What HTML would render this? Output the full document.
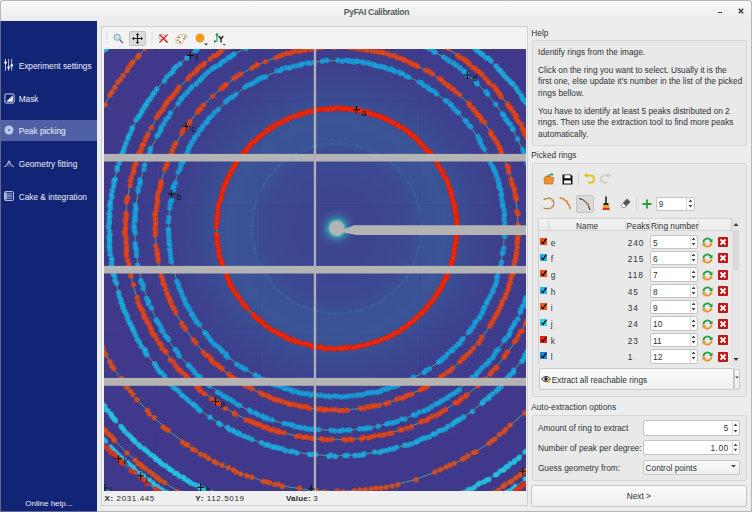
<!DOCTYPE html>
<html><head><meta charset="utf-8"><style>
*{box-sizing:border-box}
html,body{margin:0;padding:0}
body{width:752px;height:512px;overflow:hidden;position:relative;background:#ededed;font-family:"Liberation Sans",sans-serif;color:#2e3436}
.a{position:absolute}
.t{position:absolute;white-space:nowrap}
.gb{position:absolute;border:1px solid #d6d6d6;background:#e9e9e9;border-radius:2px}
.inp{position:absolute;background:#fff;border:1px solid #c5c5c5;border-radius:2px}
.btn{position:absolute;background:linear-gradient(#fbfbfb,#efefef);border:1px solid #c8c8c8;border-radius:2px}
</style></head><body>
<div class="a" style="left:1.00px;top:1.00px;width:750.00px;height:20.00px;background:linear-gradient(#fafafa,#ebebeb);border-radius:3px 3px 0 0"></div>
<div class="t" style="left:376.50px;top:7.90px;font-size:8.5px;line-height:8.5px;color:#555d60;font-weight:bold;letter-spacing:-0.3px;transform:translateX(-50%)">PyFAI Calibration</div>
<div class="a" style="left:718.30px;top:11.60px;width:4.00px;height:1.60px;background:#3a4446"></div>
<svg class="a" style="left:737px;top:7px" width="8" height="8" viewBox="0 0 8 8"><path d="M1.8 1.8L6.2 6.2M6.2 1.8L1.8 6.2" stroke="#3a4446" stroke-width="1.5"/></svg>
<div class="a" style="left:0.00px;top:21.00px;width:97.00px;height:491.00px;background:#122476"></div>
<div class="a" style="left:1.00px;top:119.50px;width:96.00px;height:21.50px;background:#5060a6"></div>
<svg class="a" style="left:3px;top:58px" width="12" height="14" viewBox="0 0 12 14"><path d="M2.5 1V12.6M5.6 1V12.6M8.7 1V12.6" stroke="#eef0f8" stroke-width="0.9" opacity="0.85"/><path d="M2.5 2.8L4.2 4.6L2.5 6.4L0.8 4.6ZM5.6 7.7L7.3 9.5L5.6 11.3L3.9 9.5ZM8.7 5.6L10.4 7.4L8.7 9.2L7 7.4Z" fill="#eef0f8"/></svg>
<svg class="a" style="left:3.5px;top:92.5px" width="11" height="11" viewBox="0 0 11 11"><rect x="0.9" y="0.9" width="9.2" height="9.2" rx="1.3" fill="none" stroke="#c8d0ec" stroke-width="1"/><path d="M2.2 8.8L8.8 2.2V8.8Z" fill="#eef0f8"/></svg>
<svg class="a" style="left:3.6px;top:125.4px" width="10" height="10" viewBox="0 0 10 10"><circle cx="5" cy="5" r="4.5" fill="#bccae8"/><circle cx="5" cy="5" r="0.9" fill="#3a4a90"/></svg>
<svg class="a" style="left:3.9px;top:159.5px" width="10" height="7.5" viewBox="0 0 10 7.5"><path d="M0.3 6.6Q2.6 6.6 3.6 4Q4.5 0.8 5 0.8Q5.5 0.8 6.4 4Q7.4 6.6 9.7 6.6" fill="none" stroke="#eef0f8" stroke-width="0.9"/><path d="M5 1.5V6.8" stroke="#eef0f8" stroke-width="0.6" opacity="0.6"/></svg>
<svg class="a" style="left:3.8px;top:190.9px" width="10" height="10" viewBox="0 0 10 10"><rect x="0.6" y="0.6" width="8.8" height="8.8" rx="0.8" fill="none" stroke="#c8d0ec" stroke-width="1"/><path d="M3 2.8h5M3 4.3h5M3 5.8h5M3 7.3h5" stroke="#b0bce0" stroke-width="0.8"/><path d="M2 1.5V8.5" stroke="#eef0f8" stroke-width="1.3"/></svg>
<div class="t" style="left:18.70px;top:62.07px;font-size:8.3px;line-height:8.3px;color:#eef0f8">Experiment settings</div>
<div class="t" style="left:18.70px;top:94.77px;font-size:8.3px;line-height:8.3px;color:#eef0f8">Mask</div>
<div class="t" style="left:18.70px;top:127.47px;font-size:8.3px;line-height:8.3px;color:#eef0f8">Peak picking</div>
<div class="t" style="left:18.70px;top:160.17px;font-size:8.3px;line-height:8.3px;color:#eef0f8">Geometry fitting</div>
<div class="t" style="left:18.70px;top:192.97px;font-size:8.3px;line-height:8.3px;color:#eef0f8">Cake &amp; integration</div>
<div class="t" style="left:25.30px;top:499.63px;font-size:8.0px;line-height:8.0px;color:#eef0f8">Online help...</div>
<div class="a" style="left:101.00px;top:26.00px;width:427.00px;height:480.00px;border:1px solid #cfcfcf;background:#efefef"></div>
<div class="a" style="left:102.00px;top:27.00px;width:425.00px;height:22.00px;background:#f3f3f3"></div>
<div class="a" style="left:128.50px;top:30.50px;width:17.00px;height:15.50px;background:#dcdcdc;border:1px solid #c2c2c2;border-radius:2px"></div>
<svg class="a" style="left:105px;top:32px" width="4" height="12"><path d="M1 1h2M1 4h2M1 7h2M1 10h2" stroke="#d0d0d0"/></svg>
<svg class="a" style="left:150px;top:32px" width="4" height="12"><path d="M1 1h2M1 4h2M1 7h2M1 10h2" stroke="#d0d0d0"/></svg>
<svg class="a" style="left:113px;top:33px" width="11" height="11" viewBox="0 0 11 11"><circle cx="4.2" cy="4.2" r="3.2" fill="#bfe3f5" stroke="#8a9aa8" stroke-width="0.9"/><path d="M6.6 6.6L10 10" stroke="#6e6e6e" stroke-width="1.4"/></svg>
<svg class="a" style="left:131.5px;top:32.5px" width="11" height="11" viewBox="0 0 11 11"><path d="M5.5 1V10M1 5.5H10" stroke="#111" stroke-width="1.1"/><path d="M5.5 0L3.8 2H7.2ZM5.5 11L3.8 9H7.2ZM0 5.5L2 3.8V7.2ZM11 5.5L9 3.8V7.2Z" fill="#111"/></svg>
<svg class="a" style="left:158px;top:33px" width="11" height="11" viewBox="0 0 11 11"><circle cx="4" cy="4" r="3" fill="#d8e8f0" stroke="#9aa" stroke-width="0.7"/><path d="M6 6L9.5 9.5" stroke="#777" stroke-width="1.2"/><path d="M1.5 1.5L9.5 9.5M9.5 1.5L1.5 9.5" stroke="#e02828" stroke-width="1.3"/></svg>
<svg class="a" style="left:175px;top:32.5px" width="13" height="12" viewBox="0 0 13 12"><path d="M1 8Q0 3 6 1.5Q12 0.5 12 4Q12 6 9 6.5Q7.5 7 8 9Q8.5 11 5 11Q2 11 1 8Z" fill="#fffaf2" stroke="#eaa868" stroke-width="0.8"/><circle cx="4" cy="4.5" r="0.9" fill="#9040c0"/><circle cx="7" cy="3.2" r="0.9" fill="#e8d020"/><circle cx="10" cy="3.5" r="0.9" fill="#30a0e0"/><circle cx="2.8" cy="7.2" r="0.9" fill="#30c040"/><circle cx="5" cy="9" r="0.9" fill="#e03080"/><circle cx="9" cy="5.5" r="0.7" fill="#555"/></svg>
<svg class="a" style="left:194px;top:32px" width="16" height="14" viewBox="0 0 16 14"><circle cx="6" cy="6" r="4.5" fill="#f39a1f"/><path d="M10 11.5h4l-2 2z" fill="#333"/></svg>
<svg class="a" style="left:212px;top:32px" width="16" height="14" viewBox="0 0 16 14"><path d="M5 3V10" stroke="#3cbf6a" stroke-width="1.6"/><circle cx="5" cy="2.6" r="1.3" fill="#2a9a50"/><rect x="2" y="8.5" width="1.8" height="1.8" fill="#444"/><path d="M6.8 4L9 7L11.2 4M9 7V10.5" stroke="#222" stroke-width="1.4" fill="none"/><path d="M10.5 12h3.5l-1.75 1.6z" fill="#444"/></svg>
<svg width="422" height="442" viewBox="104 49 422 442" style="position:absolute;left:104px;top:49px;display:block">
<defs><radialGradient id="glow" cx="336.6" cy="228.5" r="240" gradientUnits="userSpaceOnUse"><stop offset="0" stop-color="#3d4490"/><stop offset="0.17" stop-color="#3d4590"/><stop offset="0.3" stop-color="#3c4a92"/><stop offset="0.37" stop-color="#3b5296"/><stop offset="0.45" stop-color="#3b5597"/><stop offset="0.5" stop-color="#3b5196"/><stop offset="0.54" stop-color="#3b4b92"/><stop offset="0.6" stop-color="#3c4590"/><stop offset="0.7" stop-color="#3e3e8d"/><stop offset="1" stop-color="#40388b"/></radialGradient><radialGradient id="halo" cx="336.8" cy="228.3" r="20" gradientUnits="userSpaceOnUse"><stop offset="0.36" stop-color="#40c8b8"/><stop offset="0.5" stop-color="#3c8aac" stop-opacity="0.8"/><stop offset="0.75" stop-color="#3b5c9c" stop-opacity="0.5"/><stop offset="1" stop-color="#3b5598" stop-opacity="0"/></radialGradient></defs>
<rect x="104" y="49" width="422" height="442" fill="url(#glow)"/>
<g stroke="#38308a" stroke-width="1" opacity="0.2"><path d="M156 49V491M260 49V491M420 49V491M103 101H526M103 205H526M103 335H526M103 440H526"/></g>
<circle cx="336.6" cy="228.5" r="85" fill="none" stroke="#3a66a6" stroke-width="3" opacity="0.3"/><circle cx="336.6" cy="228.5" r="85" fill="none" stroke="#2ab0c8" stroke-width="1.2" stroke-dasharray="1.2 5 1 11 1.5 3 1 14 1 6" opacity="0.4"/>
<circle cx="336.6" cy="228.5" r="120" fill="none" stroke="#60d080" stroke-width="1" opacity="0.65"/>
<circle cx="336.6" cy="228.5" r="168" fill="none" stroke="#60d080" stroke-width="1" opacity="0.65"/>
<circle cx="336.6" cy="228.5" r="181.6" fill="none" stroke="#60d080" stroke-width="1" opacity="0.65"/>
<circle cx="336.6" cy="228.5" r="202" fill="none" stroke="#60d080" stroke-width="1" opacity="0.65"/>
<circle cx="336.6" cy="228.5" r="211.3" fill="none" stroke="#60d080" stroke-width="1" opacity="0.65"/>
<circle cx="336.6" cy="228.5" r="227.4" fill="none" stroke="#60d080" stroke-width="1" opacity="0.65"/>
<circle cx="336.6" cy="228.5" r="263" fill="none" stroke="#60d080" stroke-width="1" opacity="0.65"/>
<circle cx="336.6" cy="228.5" r="292.8" fill="none" stroke="#60d080" stroke-width="1" opacity="0.65"/>
<circle cx="336.6" cy="228.5" r="307" fill="none" stroke="#60d080" stroke-width="1" opacity="0.65"/>
<circle cx="336.6" cy="228.5" r="314" fill="none" stroke="#60d080" stroke-width="1" opacity="0.65"/>
<circle cx="336.6" cy="228.5" r="317.5" fill="none" stroke="#60d080" stroke-width="1" opacity="0.65"/>
<circle cx="336.6" cy="228.5" r="348" fill="none" stroke="#60d080" stroke-width="1" opacity="0.65"/>
<g class="d0" fill="#f8280a" fill-opacity="0.8" stroke="#ba1e07" stroke-opacity="0.55" stroke-width="0.7"><circle cx="456.1" cy="231.7" r="2.50"/><circle cx="456.6" cy="232.9" r="2.50"/><circle cx="456.5" cy="234.0" r="2.50"/><circle cx="455.8" cy="235.8" r="2.50"/><circle cx="456.7" cy="237.7" r="2.50"/><circle cx="456.3" cy="239.2" r="2.50"/><circle cx="455.8" cy="241.3" r="2.50"/><circle cx="456.3" cy="242.4" r="2.50"/><circle cx="455.1" cy="243.6" r="2.50"/><circle cx="454.8" cy="246.2" r="2.50"/><circle cx="454.7" cy="248.5" r="2.50"/><circle cx="454.1" cy="249.5" r="2.50"/><circle cx="454.2" cy="251.9" r="2.50"/><circle cx="453.8" cy="254.1" r="2.50"/><circle cx="453.5" cy="256.7" r="2.50"/><circle cx="452.8" cy="258.7" r="2.50"/><circle cx="451.8" cy="261.0" r="2.50"/><circle cx="451.6" cy="262.2" r="2.50"/><circle cx="451.4" cy="263.5" r="2.50"/><circle cx="451.0" cy="265.8" r="2.50"/><circle cx="449.6" cy="268.2" r="2.50"/><circle cx="449.2" cy="270.4" r="2.50"/><circle cx="448.7" cy="273.1" r="2.50"/><circle cx="446.6" cy="274.8" r="2.50"/><circle cx="446.9" cy="277.4" r="2.50"/><circle cx="445.5" cy="278.5" r="2.50"/><circle cx="445.2" cy="279.5" r="2.50"/><circle cx="444.1" cy="280.4" r="2.50"/><circle cx="443.8" cy="281.6" r="2.50"/><circle cx="442.4" cy="283.9" r="2.50"/><circle cx="442.4" cy="286.3" r="2.50"/><circle cx="440.3" cy="288.3" r="2.50"/><circle cx="440.2" cy="290.2" r="2.50"/><circle cx="438.6" cy="290.8" r="2.50"/><circle cx="438.2" cy="292.3" r="2.50"/><circle cx="436.8" cy="293.2" r="2.50"/><circle cx="436.6" cy="295.1" r="2.50"/><circle cx="435.2" cy="297.0" r="2.50"/><circle cx="433.3" cy="298.5" r="2.50"/><circle cx="432.7" cy="301.3" r="2.50"/><circle cx="431.1" cy="302.3" r="2.50"/><circle cx="429.3" cy="303.8" r="2.50"/><circle cx="428.5" cy="304.9" r="2.50"/><circle cx="427.6" cy="305.6" r="2.50"/><circle cx="427.2" cy="306.9" r="2.50"/><circle cx="425.7" cy="309.2" r="2.50"/><circle cx="424.4" cy="310.0" r="2.50"/><circle cx="424.0" cy="311.4" r="2.50"/><circle cx="422.3" cy="312.5" r="2.50"/><circle cx="421.3" cy="313.2" r="2.50"/><circle cx="419.2" cy="314.8" r="2.50"/><circle cx="417.5" cy="317.2" r="2.50"/><circle cx="415.5" cy="318.1" r="2.50"/><circle cx="414.0" cy="320.9" r="2.50"/><circle cx="412.4" cy="321.3" r="2.50"/><circle cx="410.5" cy="323.1" r="2.50"/><circle cx="408.9" cy="323.8" r="2.50"/><circle cx="407.1" cy="326.2" r="2.50"/><circle cx="404.8" cy="327.6" r="2.50"/><circle cx="402.8" cy="328.3" r="2.50"/><circle cx="401.9" cy="328.8" r="2.50"/><circle cx="400.4" cy="330.9" r="2.50"/><circle cx="398.0" cy="332.4" r="2.50"/><circle cx="395.9" cy="332.4" r="2.50"/><circle cx="394.7" cy="333.0" r="2.50"/><circle cx="392.7" cy="335.1" r="2.50"/><circle cx="390.6" cy="336.1" r="2.50"/><circle cx="388.5" cy="337.3" r="2.50"/><circle cx="386.0" cy="337.8" r="2.50"/><circle cx="383.6" cy="338.7" r="2.50"/><circle cx="380.9" cy="339.9" r="2.50"/><circle cx="378.4" cy="341.3" r="2.50"/><circle cx="376.9" cy="341.0" r="2.50"/><circle cx="374.4" cy="341.9" r="2.50"/><circle cx="371.8" cy="343.4" r="2.50"/><circle cx="369.6" cy="343.3" r="2.50"/><circle cx="367.0" cy="344.8" r="2.50"/><circle cx="364.1" cy="345.2" r="2.50"/><circle cx="361.5" cy="345.5" r="2.50"/><circle cx="359.9" cy="345.8" r="2.50"/><circle cx="358.5" cy="346.4" r="2.50"/><circle cx="355.7" cy="346.8" r="2.50"/><circle cx="353.7" cy="347.9" r="2.50"/><circle cx="350.8" cy="347.7" r="2.50"/><circle cx="348.7" cy="347.2" r="2.50"/><circle cx="347.3" cy="347.3" r="2.50"/><circle cx="346.0" cy="348.1" r="2.50"/><circle cx="343.9" cy="348.0" r="2.50"/><circle cx="341.9" cy="348.8" r="2.50"/><circle cx="339.7" cy="348.1" r="2.50"/><circle cx="337.2" cy="348.5" r="2.50"/><circle cx="334.6" cy="349.1" r="2.50"/><circle cx="332.4" cy="348.4" r="2.50"/><circle cx="330.0" cy="348.3" r="2.50"/><circle cx="328.0" cy="348.8" r="2.50"/><circle cx="325.3" cy="348.6" r="2.50"/><circle cx="323.2" cy="348.4" r="2.50"/><circle cx="322.0" cy="347.1" r="2.50"/><circle cx="320.9" cy="347.1" r="2.50"/><circle cx="318.5" cy="347.5" r="2.50"/><circle cx="317.2" cy="347.2" r="2.50"/><circle cx="315.9" cy="347.2" r="2.50"/><circle cx="314.4" cy="347.1" r="2.50"/><circle cx="312.5" cy="346.7" r="2.50"/><circle cx="311.3" cy="345.7" r="2.50"/><circle cx="309.8" cy="345.0" r="2.50"/><circle cx="307.5" cy="344.2" r="2.50"/><circle cx="305.7" cy="343.7" r="2.50"/><circle cx="303.3" cy="343.8" r="2.50"/><circle cx="300.3" cy="343.3" r="2.50"/><circle cx="299.4" cy="342.2" r="2.50"/><circle cx="297.0" cy="341.4" r="2.50"/><circle cx="295.0" cy="341.7" r="2.50"/><circle cx="293.9" cy="340.1" r="2.50"/><circle cx="291.6" cy="340.1" r="2.50"/><circle cx="290.6" cy="339.6" r="2.50"/><circle cx="289.4" cy="339.5" r="2.50"/><circle cx="287.5" cy="337.4" r="2.50"/><circle cx="286.0" cy="337.9" r="2.50"/><circle cx="284.7" cy="336.8" r="2.50"/><circle cx="283.6" cy="335.6" r="2.50"/><circle cx="282.3" cy="334.9" r="2.50"/><circle cx="281.2" cy="334.5" r="2.50"/><circle cx="279.5" cy="334.4" r="2.50"/><circle cx="278.1" cy="332.8" r="2.50"/><circle cx="277.1" cy="332.3" r="2.50"/><circle cx="274.8" cy="331.4" r="2.50"/><circle cx="272.9" cy="330.9" r="2.50"/><circle cx="271.0" cy="328.9" r="2.50"/><circle cx="268.8" cy="327.3" r="2.50"/><circle cx="266.4" cy="326.7" r="2.50"/><circle cx="264.5" cy="324.8" r="2.50"/><circle cx="263.3" cy="323.3" r="2.50"/><circle cx="262.6" cy="322.2" r="2.50"/><circle cx="261.3" cy="321.3" r="2.50"/><circle cx="258.6" cy="320.4" r="2.50"/><circle cx="258.0" cy="318.7" r="2.50"/><circle cx="256.7" cy="317.4" r="2.50"/><circle cx="254.8" cy="317.2" r="2.50"/><circle cx="253.9" cy="315.0" r="2.50"/><circle cx="252.7" cy="314.0" r="2.50"/><circle cx="247.7" cy="309.0" r="2.50"/><circle cx="246.7" cy="308.0" r="2.50"/><circle cx="246.1" cy="306.5" r="2.50"/><circle cx="245.5" cy="305.6" r="2.50"/><circle cx="244.0" cy="305.0" r="2.50"/><circle cx="242.3" cy="303.1" r="2.50"/><circle cx="240.9" cy="300.7" r="2.50"/><circle cx="239.4" cy="298.1" r="2.50"/><circle cx="238.3" cy="296.1" r="2.50"/><circle cx="236.0" cy="294.3" r="2.50"/><circle cx="235.2" cy="291.7" r="2.50"/><circle cx="233.3" cy="290.5" r="2.50"/><circle cx="232.3" cy="288.0" r="2.50"/><circle cx="231.0" cy="286.0" r="2.50"/><circle cx="231.2" cy="284.7" r="2.50"/><circle cx="229.7" cy="284.1" r="2.50"/><circle cx="229.0" cy="282.0" r="2.50"/><circle cx="228.9" cy="279.8" r="2.50"/><circle cx="227.2" cy="277.8" r="2.50"/><circle cx="226.8" cy="275.5" r="2.50"/><circle cx="226.3" cy="274.1" r="2.50"/><circle cx="225.2" cy="271.9" r="2.50"/><circle cx="223.8" cy="269.3" r="2.50"/><circle cx="222.9" cy="267.5" r="2.50"/><circle cx="222.2" cy="265.4" r="2.50"/><circle cx="222.3" cy="264.0" r="2.50"/><circle cx="221.4" cy="262.6" r="2.50"/><circle cx="221.5" cy="261.4" r="2.50"/><circle cx="220.3" cy="259.2" r="2.50"/><circle cx="220.1" cy="257.2" r="2.50"/><circle cx="219.3" cy="256.1" r="2.50"/><circle cx="218.6" cy="253.2" r="2.50"/><circle cx="218.3" cy="251.3" r="2.50"/><circle cx="218.7" cy="249.3" r="2.50"/><circle cx="218.4" cy="246.5" r="2.50"/><circle cx="217.7" cy="245.3" r="2.50"/><circle cx="217.2" cy="244.1" r="2.50"/><circle cx="217.0" cy="241.3" r="2.50"/><circle cx="217.0" cy="238.5" r="2.50"/><circle cx="216.9" cy="237.5" r="2.50"/><circle cx="217.3" cy="235.8" r="2.50"/><circle cx="216.3" cy="234.2" r="2.50"/><circle cx="216.1" cy="227.1" r="2.50"/><circle cx="216.4" cy="224.3" r="2.50"/><circle cx="216.9" cy="222.7" r="2.50"/><circle cx="216.8" cy="219.7" r="2.50"/><circle cx="217.4" cy="217.9" r="2.50"/><circle cx="216.7" cy="216.6" r="2.50"/><circle cx="217.9" cy="213.8" r="2.50"/><circle cx="218.2" cy="211.9" r="2.50"/><circle cx="217.7" cy="208.8" r="2.50"/><circle cx="218.0" cy="206.6" r="2.50"/><circle cx="218.7" cy="204.6" r="2.50"/><circle cx="219.6" cy="202.2" r="2.50"/><circle cx="220.3" cy="200.1" r="2.50"/><circle cx="221.3" cy="197.4" r="2.50"/><circle cx="221.5" cy="195.7" r="2.50"/><circle cx="222.4" cy="192.9" r="2.50"/><circle cx="222.5" cy="191.2" r="2.50"/><circle cx="223.4" cy="190.1" r="2.50"/><circle cx="223.9" cy="187.3" r="2.50"/><circle cx="224.2" cy="184.4" r="2.50"/><circle cx="225.8" cy="183.7" r="2.50"/><circle cx="226.5" cy="182.2" r="2.50"/><circle cx="226.5" cy="180.5" r="2.50"/><circle cx="227.7" cy="178.3" r="2.50"/><circle cx="228.6" cy="176.5" r="2.50"/><circle cx="229.3" cy="175.5" r="2.50"/><circle cx="229.5" cy="174.3" r="2.50"/><circle cx="231.2" cy="172.1" r="2.50"/><circle cx="231.6" cy="170.6" r="2.50"/><circle cx="232.5" cy="167.8" r="2.50"/><circle cx="234.0" cy="167.5" r="2.50"/><circle cx="235.0" cy="164.8" r="2.50"/><circle cx="235.6" cy="164.0" r="2.50"/><circle cx="236.5" cy="161.4" r="2.50"/><circle cx="238.2" cy="160.8" r="2.50"/><circle cx="238.7" cy="158.6" r="2.50"/><circle cx="240.2" cy="156.7" r="2.50"/><circle cx="241.5" cy="155.2" r="2.50"/><circle cx="243.4" cy="153.5" r="2.50"/><circle cx="244.8" cy="151.7" r="2.50"/><circle cx="245.4" cy="150.2" r="2.50"/><circle cx="246.8" cy="149.8" r="2.50"/><circle cx="247.9" cy="147.9" r="2.50"/><circle cx="249.8" cy="146.7" r="2.50"/><circle cx="250.2" cy="144.3" r="2.50"/><circle cx="252.6" cy="142.9" r="2.50"/><circle cx="253.2" cy="141.3" r="2.50"/><circle cx="255.3" cy="141.2" r="2.50"/><circle cx="256.6" cy="139.2" r="2.50"/><circle cx="257.9" cy="137.1" r="2.50"/><circle cx="259.3" cy="137.0" r="2.50"/><circle cx="261.2" cy="135.7" r="2.50"/><circle cx="262.9" cy="133.8" r="2.50"/><circle cx="265.4" cy="132.3" r="2.50"/><circle cx="266.6" cy="131.5" r="2.50"/><circle cx="267.3" cy="129.7" r="2.50"/><circle cx="269.0" cy="129.8" r="2.50"/><circle cx="270.4" cy="127.6" r="2.50"/><circle cx="272.5" cy="127.5" r="2.50"/><circle cx="273.7" cy="127.1" r="2.50"/><circle cx="274.6" cy="125.1" r="2.50"/><circle cx="276.7" cy="123.7" r="2.50"/><circle cx="278.7" cy="123.9" r="2.50"/><circle cx="280.9" cy="122.9" r="2.50"/><circle cx="282.3" cy="121.7" r="2.50"/><circle cx="283.7" cy="121.6" r="2.50"/><circle cx="284.7" cy="119.6" r="2.50"/><circle cx="287.8" cy="119.3" r="2.50"/><circle cx="289.8" cy="117.5" r="2.50"/><circle cx="291.0" cy="117.5" r="2.50"/><circle cx="293.8" cy="116.8" r="2.50"/><circle cx="296.5" cy="116.1" r="2.50"/><circle cx="298.6" cy="114.3" r="2.50"/><circle cx="300.0" cy="114.9" r="2.50"/><circle cx="301.1" cy="113.5" r="2.50"/><circle cx="302.9" cy="113.7" r="2.50"/><circle cx="305.1" cy="113.1" r="2.50"/><circle cx="306.6" cy="112.6" r="2.50"/><circle cx="308.9" cy="111.2" r="2.50"/><circle cx="312.0" cy="111.7" r="2.50"/><circle cx="313.6" cy="110.1" r="2.50"/><circle cx="315.5" cy="110.7" r="2.50"/><circle cx="317.3" cy="109.4" r="2.50"/><circle cx="320.0" cy="109.3" r="2.50"/><circle cx="322.5" cy="109.2" r="2.50"/><circle cx="324.2" cy="109.3" r="2.50"/><circle cx="325.3" cy="109.5" r="2.50"/><circle cx="326.8" cy="109.5" r="2.50"/><circle cx="328.9" cy="109.0" r="2.50"/><circle cx="331.6" cy="107.9" r="2.50"/><circle cx="332.8" cy="109.1" r="2.50"/><circle cx="335.2" cy="108.6" r="2.50"/><circle cx="337.1" cy="108.3" r="2.50"/><circle cx="339.6" cy="108.1" r="2.50"/><circle cx="340.8" cy="108.1" r="2.50"/><circle cx="342.9" cy="108.8" r="2.50"/><circle cx="344.3" cy="109.1" r="2.50"/><circle cx="345.7" cy="108.3" r="2.50"/><circle cx="347.3" cy="109.1" r="2.50"/><circle cx="349.3" cy="109.5" r="2.50"/><circle cx="351.7" cy="108.8" r="2.50"/><circle cx="353.6" cy="109.3" r="2.50"/><circle cx="356.2" cy="110.8" r="2.50"/><circle cx="357.5" cy="110.8" r="2.50"/><circle cx="359.8" cy="110.1" r="2.50"/><circle cx="362.3" cy="111.4" r="2.50"/><circle cx="365.0" cy="111.3" r="2.50"/><circle cx="367.0" cy="112.2" r="2.50"/><circle cx="368.5" cy="113.3" r="2.50"/><circle cx="370.1" cy="113.1" r="2.50"/><circle cx="371.2" cy="114.3" r="2.50"/><circle cx="373.6" cy="114.8" r="2.50"/><circle cx="375.2" cy="114.4" r="2.50"/><circle cx="375.9" cy="115.7" r="2.50"/><circle cx="378.1" cy="115.7" r="2.50"/><circle cx="379.4" cy="116.1" r="2.50"/><circle cx="380.7" cy="117.2" r="2.50"/><circle cx="382.3" cy="117.4" r="2.50"/><circle cx="384.2" cy="117.8" r="2.50"/><circle cx="385.4" cy="119.3" r="2.50"/><circle cx="386.5" cy="120.1" r="2.50"/><circle cx="388.7" cy="119.9" r="2.50"/><circle cx="391.0" cy="121.6" r="2.50"/><circle cx="391.9" cy="121.9" r="2.50"/><circle cx="394.1" cy="123.8" r="2.50"/><circle cx="395.9" cy="124.2" r="2.50"/><circle cx="397.3" cy="124.9" r="2.50"/><circle cx="398.3" cy="125.6" r="2.50"/><circle cx="400.6" cy="127.5" r="2.50"/><circle cx="403.6" cy="128.1" r="2.50"/><circle cx="404.5" cy="128.8" r="2.50"/><circle cx="406.5" cy="130.8" r="2.50"/><circle cx="407.8" cy="131.4" r="2.50"/><circle cx="409.3" cy="132.4" r="2.50"/><circle cx="409.8" cy="133.9" r="2.50"/><circle cx="411.5" cy="135.0" r="2.50"/><circle cx="413.0" cy="135.6" r="2.50"/><circle cx="413.7" cy="136.4" r="2.50"/><circle cx="414.8" cy="136.8" r="2.50"/><circle cx="416.2" cy="138.6" r="2.50"/><circle cx="417.3" cy="139.8" r="2.50"/><circle cx="418.8" cy="140.8" r="2.50"/><circle cx="419.6" cy="142.7" r="2.50"/><circle cx="421.2" cy="143.9" r="2.50"/><circle cx="423.2" cy="145.5" r="2.50"/><circle cx="424.2" cy="147.3" r="2.50"/><circle cx="425.4" cy="148.7" r="2.50"/><circle cx="426.7" cy="150.2" r="2.50"/><circle cx="428.2" cy="150.5" r="2.50"/><circle cx="428.8" cy="152.6" r="2.50"/><circle cx="430.8" cy="153.2" r="2.50"/><circle cx="432.6" cy="155.3" r="2.50"/><circle cx="433.2" cy="158.1" r="2.50"/><circle cx="435.3" cy="159.1" r="2.50"/><circle cx="435.8" cy="160.3" r="2.50"/><circle cx="436.0" cy="161.6" r="2.50"/><circle cx="437.3" cy="162.3" r="2.50"/><circle cx="437.9" cy="165.0" r="2.50"/><circle cx="439.4" cy="167.4" r="2.50"/><circle cx="440.6" cy="169.1" r="2.50"/><circle cx="441.0" cy="170.4" r="2.50"/><circle cx="443.1" cy="171.9" r="2.50"/><circle cx="443.3" cy="174.7" r="2.50"/><circle cx="444.6" cy="176.6" r="2.50"/><circle cx="445.8" cy="178.4" r="2.50"/><circle cx="446.8" cy="179.3" r="2.50"/><circle cx="447.3" cy="181.0" r="2.50"/><circle cx="448.1" cy="183.9" r="2.50"/><circle cx="448.9" cy="186.3" r="2.50"/><circle cx="449.2" cy="188.8" r="2.50"/><circle cx="450.5" cy="190.0" r="2.50"/><circle cx="451.2" cy="192.0" r="2.50"/><circle cx="450.6" cy="193.3" r="2.50"/><circle cx="451.8" cy="195.2" r="2.50"/><circle cx="452.1" cy="198.0" r="2.50"/><circle cx="452.5" cy="200.3" r="2.50"/><circle cx="453.1" cy="201.9" r="2.50"/><circle cx="454.0" cy="203.2" r="2.50"/><circle cx="454.4" cy="204.6" r="2.50"/><circle cx="455.0" cy="205.7" r="2.50"/><circle cx="454.1" cy="207.2" r="2.50"/><circle cx="455.5" cy="209.8" r="2.50"/><circle cx="454.7" cy="211.4" r="2.50"/><circle cx="455.4" cy="213.5" r="2.50"/><circle cx="456.5" cy="215.2" r="2.50"/><circle cx="456.6" cy="216.7" r="2.50"/><circle cx="456.1" cy="218.9" r="2.50"/><circle cx="456.7" cy="219.9" r="2.50"/><circle cx="457.0" cy="222.0" r="2.50"/><circle cx="456.6" cy="223.5" r="2.50"/><circle cx="457.0" cy="225.7" r="2.50"/><circle cx="456.3" cy="227.4" r="2.50"/></g>
<g class="d1" fill="#1ca2e2" fill-opacity="0.8" stroke="#1579a9" stroke-opacity="0.55" stroke-width="0.7"><circle cx="504.7" cy="236.3" r="2.70"/><circle cx="503.8" cy="248.1" r="2.70"/><circle cx="502.9" cy="251.7" r="2.70"/><circle cx="502.4" cy="253.5" r="2.70"/><circle cx="501.5" cy="262.3" r="2.70"/><circle cx="500.6" cy="266.3" r="2.70"/><circle cx="499.5" cy="269.2" r="2.70"/><circle cx="498.5" cy="272.2" r="2.70"/><circle cx="497.2" cy="276.4" r="2.70"/><circle cx="496.8" cy="277.8" r="2.70"/><circle cx="496.6" cy="281.7" r="2.70"/><circle cx="495.7" cy="284.0" r="2.70"/><circle cx="495.0" cy="286.1" r="2.70"/><circle cx="493.4" cy="289.4" r="2.70"/><circle cx="492.6" cy="292.2" r="2.70"/><circle cx="490.5" cy="295.7" r="2.70"/><circle cx="489.0" cy="298.6" r="2.70"/><circle cx="487.3" cy="301.5" r="2.70"/><circle cx="486.4" cy="303.2" r="2.70"/><circle cx="484.8" cy="307.2" r="2.70"/><circle cx="483.7" cy="308.4" r="2.70"/><circle cx="482.8" cy="311.8" r="2.70"/><circle cx="481.9" cy="313.2" r="2.70"/><circle cx="480.1" cy="316.7" r="2.70"/><circle cx="479.3" cy="318.2" r="2.70"/><circle cx="476.0" cy="321.3" r="2.70"/><circle cx="474.9" cy="322.7" r="2.70"/><circle cx="473.3" cy="326.4" r="2.70"/><circle cx="470.9" cy="328.9" r="2.70"/><circle cx="470.4" cy="330.7" r="2.70"/><circle cx="468.5" cy="332.4" r="2.70"/><circle cx="463.0" cy="338.7" r="2.70"/><circle cx="461.3" cy="340.7" r="2.70"/><circle cx="459.8" cy="343.4" r="2.70"/><circle cx="458.3" cy="344.2" r="2.70"/><circle cx="455.5" cy="346.8" r="2.70"/><circle cx="453.2" cy="348.9" r="2.70"/><circle cx="452.5" cy="350.7" r="2.70"/><circle cx="450.8" cy="351.1" r="2.70"/><circle cx="447.4" cy="353.9" r="2.70"/><circle cx="445.8" cy="356.7" r="2.70"/><circle cx="443.1" cy="358.1" r="2.70"/><circle cx="441.9" cy="360.2" r="2.70"/><circle cx="440.0" cy="361.3" r="2.70"/><circle cx="438.5" cy="362.3" r="2.70"/><circle cx="429.2" cy="369.0" r="2.70"/><circle cx="426.1" cy="370.4" r="2.70"/><circle cx="424.2" cy="372.5" r="2.70"/><circle cx="413.2" cy="377.3" r="2.70"/><circle cx="411.7" cy="379.4" r="2.70"/><circle cx="409.3" cy="380.5" r="2.70"/><circle cx="406.5" cy="381.3" r="2.70"/><circle cx="403.1" cy="383.0" r="2.70"/><circle cx="400.6" cy="383.3" r="2.70"/><circle cx="397.6" cy="385.4" r="2.70"/><circle cx="395.0" cy="386.4" r="2.70"/><circle cx="393.1" cy="386.7" r="2.70"/><circle cx="390.9" cy="387.0" r="2.70"/><circle cx="387.7" cy="389.0" r="2.70"/><circle cx="385.6" cy="388.8" r="2.70"/><circle cx="382.7" cy="389.6" r="2.70"/><circle cx="381.0" cy="391.2" r="2.70"/><circle cx="379.2" cy="391.7" r="2.70"/><circle cx="376.6" cy="392.4" r="2.70"/><circle cx="372.9" cy="392.4" r="2.70"/><circle cx="369.4" cy="392.7" r="2.70"/><circle cx="366.8" cy="393.1" r="2.70"/><circle cx="363.1" cy="394.7" r="2.70"/><circle cx="359.7" cy="394.8" r="2.70"/><circle cx="356.4" cy="395.2" r="2.70"/><circle cx="352.2" cy="395.7" r="2.70"/><circle cx="348.5" cy="396.0" r="2.70"/><circle cx="344.9" cy="396.8" r="2.70"/><circle cx="341.3" cy="396.9" r="2.70"/><circle cx="337.8" cy="396.4" r="2.70"/><circle cx="334.5" cy="395.9" r="2.70"/><circle cx="330.6" cy="396.7" r="2.70"/><circle cx="328.4" cy="396.2" r="2.70"/><circle cx="325.0" cy="396.0" r="2.70"/><circle cx="320.8" cy="395.3" r="2.70"/><circle cx="316.9" cy="395.2" r="2.70"/><circle cx="312.6" cy="394.1" r="2.70"/><circle cx="310.5" cy="394.9" r="2.70"/><circle cx="307.6" cy="393.4" r="2.70"/><circle cx="304.4" cy="393.7" r="2.70"/><circle cx="301.0" cy="393.2" r="2.70"/><circle cx="298.3" cy="392.7" r="2.70"/><circle cx="295.1" cy="391.1" r="2.70"/><circle cx="293.0" cy="391.5" r="2.70"/><circle cx="291.7" cy="390.1" r="2.70"/><circle cx="290.1" cy="389.8" r="2.70"/><circle cx="286.7" cy="388.7" r="2.70"/><circle cx="284.5" cy="388.6" r="2.70"/><circle cx="281.8" cy="386.9" r="2.70"/><circle cx="279.3" cy="386.0" r="2.70"/><circle cx="275.4" cy="385.4" r="2.70"/><circle cx="272.8" cy="384.0" r="2.70"/><circle cx="268.9" cy="382.0" r="2.70"/><circle cx="265.0" cy="381.0" r="2.70"/><circle cx="263.1" cy="379.6" r="2.70"/><circle cx="259.6" cy="377.6" r="2.70"/><circle cx="257.5" cy="376.5" r="2.70"/><circle cx="255.2" cy="375.0" r="2.70"/><circle cx="245.7" cy="369.4" r="2.70"/><circle cx="243.6" cy="368.4" r="2.70"/><circle cx="240.6" cy="366.6" r="2.70"/><circle cx="236.9" cy="364.4" r="2.70"/><circle cx="227.7" cy="357.2" r="2.70"/><circle cx="226.3" cy="355.9" r="2.70"/><circle cx="225.9" cy="354.0" r="2.70"/><circle cx="223.1" cy="351.9" r="2.70"/><circle cx="221.7" cy="350.6" r="2.70"/><circle cx="220.0" cy="348.8" r="2.70"/><circle cx="217.2" cy="346.1" r="2.70"/><circle cx="214.3" cy="344.3" r="2.70"/><circle cx="211.5" cy="341.2" r="2.70"/><circle cx="210.2" cy="339.5" r="2.70"/><circle cx="208.0" cy="336.5" r="2.70"/><circle cx="206.2" cy="333.9" r="2.70"/><circle cx="204.7" cy="332.6" r="2.70"/><circle cx="199.4" cy="324.6" r="2.70"/><circle cx="197.2" cy="322.4" r="2.70"/><circle cx="196.1" cy="321.4" r="2.70"/><circle cx="194.5" cy="318.6" r="2.70"/><circle cx="193.4" cy="316.2" r="2.70"/><circle cx="192.3" cy="314.9" r="2.70"/><circle cx="191.5" cy="313.5" r="2.70"/><circle cx="189.7" cy="309.5" r="2.70"/><circle cx="188.1" cy="307.0" r="2.70"/><circle cx="187.1" cy="305.7" r="2.70"/><circle cx="185.7" cy="303.6" r="2.70"/><circle cx="184.9" cy="300.7" r="2.70"/><circle cx="184.1" cy="298.7" r="2.70"/><circle cx="182.3" cy="296.1" r="2.70"/><circle cx="181.3" cy="292.2" r="2.70"/><circle cx="180.3" cy="290.1" r="2.70"/><circle cx="178.7" cy="287.0" r="2.70"/><circle cx="178.5" cy="284.4" r="2.70"/><circle cx="176.7" cy="281.4" r="2.70"/><circle cx="173.5" cy="270.8" r="2.70"/><circle cx="173.9" cy="269.0" r="2.70"/><circle cx="171.2" cy="261.4" r="2.70"/><circle cx="170.8" cy="257.9" r="2.70"/><circle cx="170.5" cy="254.6" r="2.70"/><circle cx="170.0" cy="251.0" r="2.70"/><circle cx="169.6" cy="248.9" r="2.70"/><circle cx="170.0" cy="245.1" r="2.70"/><circle cx="168.9" cy="243.5" r="2.70"/><circle cx="169.2" cy="240.0" r="2.70"/><circle cx="168.7" cy="236.2" r="2.70"/><circle cx="168.8" cy="233.8" r="2.70"/><circle cx="168.4" cy="231.0" r="2.70"/><circle cx="168.5" cy="229.3" r="2.70"/><circle cx="168.3" cy="221.7" r="2.70"/><circle cx="169.0" cy="217.4" r="2.70"/><circle cx="169.7" cy="208.3" r="2.70"/><circle cx="170.4" cy="203.9" r="2.70"/><circle cx="170.5" cy="202.1" r="2.70"/><circle cx="171.7" cy="200.3" r="2.70"/><circle cx="173.7" cy="189.7" r="2.70"/><circle cx="173.1" cy="187.7" r="2.70"/><circle cx="173.7" cy="186.3" r="2.70"/><circle cx="175.4" cy="182.9" r="2.70"/><circle cx="178.1" cy="171.9" r="2.70"/><circle cx="180.2" cy="168.7" r="2.70"/><circle cx="181.1" cy="165.2" r="2.70"/><circle cx="181.3" cy="162.8" r="2.70"/><circle cx="183.1" cy="161.9" r="2.70"/><circle cx="184.6" cy="158.3" r="2.70"/><circle cx="186.1" cy="154.9" r="2.70"/><circle cx="187.5" cy="152.3" r="2.70"/><circle cx="188.6" cy="149.2" r="2.70"/><circle cx="189.0" cy="147.3" r="2.70"/><circle cx="190.9" cy="144.4" r="2.70"/><circle cx="192.1" cy="142.0" r="2.70"/><circle cx="194.4" cy="138.9" r="2.70"/><circle cx="194.8" cy="137.2" r="2.70"/><circle cx="197.8" cy="134.3" r="2.70"/><circle cx="199.7" cy="130.3" r="2.70"/><circle cx="201.6" cy="128.7" r="2.70"/><circle cx="202.9" cy="126.3" r="2.70"/><circle cx="205.4" cy="122.9" r="2.70"/><circle cx="206.9" cy="122.2" r="2.70"/><circle cx="208.4" cy="119.2" r="2.70"/><circle cx="209.4" cy="118.0" r="2.70"/><circle cx="212.4" cy="115.2" r="2.70"/><circle cx="215.0" cy="112.0" r="2.70"/><circle cx="218.4" cy="109.4" r="2.70"/><circle cx="225.4" cy="102.0" r="2.70"/><circle cx="228.1" cy="99.5" r="2.70"/><circle cx="230.9" cy="97.6" r="2.70"/><circle cx="232.9" cy="96.7" r="2.70"/><circle cx="235.8" cy="94.2" r="2.70"/><circle cx="245.0" cy="87.2" r="2.70"/><circle cx="247.7" cy="85.3" r="2.70"/><circle cx="250.6" cy="84.2" r="2.70"/><circle cx="252.6" cy="83.5" r="2.70"/><circle cx="255.6" cy="81.5" r="2.70"/><circle cx="257.9" cy="80.1" r="2.70"/><circle cx="259.0" cy="78.7" r="2.70"/><circle cx="260.9" cy="78.3" r="2.70"/><circle cx="262.6" cy="77.5" r="2.70"/><circle cx="265.7" cy="76.9" r="2.70"/><circle cx="276.8" cy="70.9" r="2.70"/><circle cx="280.1" cy="70.6" r="2.70"/><circle cx="282.4" cy="68.8" r="2.70"/><circle cx="286.2" cy="67.6" r="2.70"/><circle cx="288.1" cy="68.1" r="2.70"/><circle cx="289.8" cy="67.8" r="2.70"/><circle cx="293.6" cy="66.2" r="2.70"/><circle cx="297.8" cy="65.7" r="2.70"/><circle cx="300.4" cy="65.0" r="2.70"/><circle cx="302.5" cy="63.9" r="2.70"/><circle cx="306.8" cy="62.9" r="2.70"/><circle cx="309.7" cy="63.2" r="2.70"/><circle cx="314.1" cy="62.4" r="2.70"/><circle cx="322.4" cy="61.3" r="2.70"/><circle cx="326.6" cy="60.3" r="2.70"/><circle cx="338.0" cy="60.2" r="2.70"/><circle cx="342.5" cy="61.2" r="2.70"/><circle cx="346.3" cy="60.2" r="2.70"/><circle cx="348.6" cy="60.8" r="2.70"/><circle cx="350.4" cy="61.3" r="2.70"/><circle cx="352.3" cy="61.3" r="2.70"/><circle cx="354.5" cy="62.0" r="2.70"/><circle cx="356.1" cy="61.3" r="2.70"/><circle cx="357.7" cy="61.2" r="2.70"/><circle cx="362.0" cy="61.9" r="2.70"/><circle cx="363.8" cy="62.8" r="2.70"/><circle cx="368.1" cy="63.0" r="2.70"/><circle cx="370.8" cy="64.2" r="2.70"/><circle cx="373.7" cy="64.5" r="2.70"/><circle cx="375.7" cy="65.7" r="2.70"/><circle cx="378.7" cy="66.4" r="2.70"/><circle cx="381.0" cy="66.6" r="2.70"/><circle cx="383.4" cy="66.7" r="2.70"/><circle cx="385.2" cy="67.7" r="2.70"/><circle cx="389.1" cy="69.5" r="2.70"/><circle cx="391.0" cy="69.0" r="2.70"/><circle cx="392.8" cy="70.2" r="2.70"/><circle cx="394.8" cy="71.4" r="2.70"/><circle cx="399.4" cy="71.9" r="2.70"/><circle cx="400.7" cy="73.5" r="2.70"/><circle cx="402.5" cy="73.6" r="2.70"/><circle cx="406.1" cy="76.3" r="2.70"/><circle cx="408.5" cy="77.2" r="2.70"/><circle cx="419.1" cy="82.1" r="2.70"/><circle cx="421.8" cy="83.0" r="2.70"/><circle cx="424.0" cy="85.6" r="2.70"/><circle cx="427.6" cy="86.9" r="2.70"/><circle cx="428.6" cy="88.6" r="2.70"/><circle cx="431.2" cy="90.1" r="2.70"/><circle cx="434.3" cy="91.5" r="2.70"/><circle cx="436.5" cy="94.0" r="2.70"/><circle cx="445.4" cy="100.6" r="2.70"/><circle cx="447.0" cy="101.3" r="2.70"/><circle cx="450.1" cy="103.9" r="2.70"/><circle cx="451.3" cy="104.9" r="2.70"/><circle cx="453.6" cy="108.4" r="2.70"/><circle cx="456.5" cy="111.1" r="2.70"/><circle cx="458.6" cy="112.8" r="2.70"/><circle cx="465.0" cy="120.3" r="2.70"/><circle cx="466.5" cy="121.5" r="2.70"/><circle cx="468.7" cy="125.1" r="2.70"/><circle cx="470.7" cy="126.8" r="2.70"/><circle cx="477.8" cy="136.4" r="2.70"/><circle cx="479.0" cy="139.3" r="2.70"/><circle cx="480.3" cy="140.3" r="2.70"/><circle cx="480.4" cy="142.6" r="2.70"/><circle cx="482.2" cy="146.1" r="2.70"/><circle cx="484.2" cy="149.1" r="2.70"/><circle cx="489.3" cy="158.1" r="2.70"/><circle cx="490.1" cy="161.7" r="2.70"/><circle cx="491.5" cy="165.1" r="2.70"/><circle cx="493.2" cy="167.6" r="2.70"/><circle cx="493.7" cy="169.4" r="2.70"/><circle cx="495.4" cy="172.3" r="2.70"/><circle cx="496.3" cy="175.4" r="2.70"/><circle cx="497.8" cy="179.1" r="2.70"/><circle cx="498.5" cy="181.8" r="2.70"/><circle cx="499.3" cy="184.3" r="2.70"/><circle cx="499.0" cy="187.0" r="2.70"/><circle cx="500.7" cy="189.5" r="2.70"/><circle cx="501.4" cy="193.7" r="2.70"/><circle cx="501.3" cy="195.4" r="2.70"/><circle cx="501.8" cy="199.7" r="2.70"/><circle cx="502.5" cy="203.0" r="2.70"/><circle cx="502.8" cy="204.7" r="2.70"/><circle cx="502.6" cy="206.3" r="2.70"/><circle cx="504.2" cy="210.0" r="2.70"/><circle cx="504.5" cy="213.9" r="2.70"/><circle cx="504.3" cy="215.5" r="2.70"/><circle cx="504.0" cy="219.1" r="2.70"/><circle cx="504.7" cy="223.3" r="2.70"/><circle cx="504.5" cy="226.4" r="2.70"/></g>
<g class="d2" fill="#e8461c" fill-opacity="0.8" stroke="#ae3415" stroke-opacity="0.55" stroke-width="0.7"><circle cx="518.4" cy="231.6" r="2.70"/><circle cx="518.7" cy="234.9" r="2.70"/><circle cx="517.9" cy="237.1" r="2.70"/><circle cx="517.4" cy="239.1" r="2.70"/><circle cx="517.6" cy="241.4" r="2.70"/><circle cx="517.0" cy="243.6" r="2.70"/><circle cx="517.3" cy="247.7" r="2.70"/><circle cx="516.4" cy="251.1" r="2.70"/><circle cx="516.5" cy="254.0" r="2.70"/><circle cx="515.7" cy="256.8" r="2.70"/><circle cx="515.6" cy="259.0" r="2.70"/><circle cx="514.4" cy="262.1" r="2.70"/><circle cx="513.9" cy="266.1" r="2.70"/><circle cx="513.3" cy="269.0" r="2.70"/><circle cx="513.4" cy="271.5" r="2.70"/><circle cx="513.2" cy="273.2" r="2.70"/><circle cx="512.1" cy="274.7" r="2.70"/><circle cx="510.7" cy="278.1" r="2.70"/><circle cx="510.3" cy="282.6" r="2.70"/><circle cx="509.0" cy="284.8" r="2.70"/><circle cx="508.6" cy="288.2" r="2.70"/><circle cx="507.5" cy="291.0" r="2.70"/><circle cx="505.8" cy="294.4" r="2.70"/><circle cx="505.0" cy="298.0" r="2.70"/><circle cx="502.2" cy="301.3" r="2.70"/><circle cx="501.5" cy="304.6" r="2.70"/><circle cx="500.0" cy="307.4" r="2.70"/><circle cx="498.4" cy="311.2" r="2.70"/><circle cx="496.9" cy="313.7" r="2.70"/><circle cx="495.7" cy="315.7" r="2.70"/><circle cx="494.3" cy="318.0" r="2.70"/><circle cx="492.5" cy="321.6" r="2.70"/><circle cx="491.2" cy="323.2" r="2.70"/><circle cx="489.8" cy="326.2" r="2.70"/><circle cx="481.9" cy="337.0" r="2.70"/><circle cx="480.2" cy="340.7" r="2.70"/><circle cx="478.4" cy="342.9" r="2.70"/><circle cx="473.3" cy="348.2" r="2.70"/><circle cx="470.7" cy="351.6" r="2.70"/><circle cx="467.3" cy="354.6" r="2.70"/><circle cx="464.7" cy="357.0" r="2.70"/><circle cx="462.3" cy="359.3" r="2.70"/><circle cx="459.9" cy="361.9" r="2.70"/><circle cx="452.6" cy="368.1" r="2.70"/><circle cx="450.5" cy="370.6" r="2.70"/><circle cx="447.8" cy="372.0" r="2.70"/><circle cx="444.1" cy="374.6" r="2.70"/><circle cx="440.8" cy="376.7" r="2.70"/><circle cx="437.6" cy="379.9" r="2.70"/><circle cx="436.2" cy="381.0" r="2.70"/><circle cx="432.9" cy="383.3" r="2.70"/><circle cx="429.9" cy="383.7" r="2.70"/><circle cx="427.6" cy="385.7" r="2.70"/><circle cx="425.9" cy="386.9" r="2.70"/><circle cx="423.9" cy="388.5" r="2.70"/><circle cx="422.0" cy="388.6" r="2.70"/><circle cx="420.1" cy="390.1" r="2.70"/><circle cx="411.9" cy="394.3" r="2.70"/><circle cx="408.4" cy="394.9" r="2.70"/><circle cx="405.5" cy="396.2" r="2.70"/><circle cx="403.0" cy="398.3" r="2.70"/><circle cx="400.0" cy="398.1" r="2.70"/><circle cx="396.5" cy="399.4" r="2.70"/><circle cx="388.9" cy="402.4" r="2.70"/><circle cx="385.8" cy="403.8" r="2.70"/><circle cx="378.9" cy="405.5" r="2.70"/><circle cx="375.2" cy="405.7" r="2.70"/><circle cx="372.9" cy="405.9" r="2.70"/><circle cx="369.8" cy="406.8" r="2.70"/><circle cx="367.1" cy="406.9" r="2.70"/><circle cx="364.1" cy="408.7" r="2.70"/><circle cx="360.6" cy="408.2" r="2.70"/><circle cx="347.2" cy="410.3" r="2.70"/><circle cx="343.0" cy="410.4" r="2.70"/><circle cx="339.7" cy="410.7" r="2.70"/><circle cx="335.4" cy="409.7" r="2.70"/><circle cx="331.7" cy="409.6" r="2.70"/><circle cx="327.6" cy="409.9" r="2.70"/><circle cx="325.4" cy="409.3" r="2.70"/><circle cx="323.3" cy="410.3" r="2.70"/><circle cx="320.2" cy="408.8" r="2.70"/><circle cx="317.5" cy="409.0" r="2.70"/><circle cx="309.6" cy="408.5" r="2.70"/><circle cx="307.5" cy="407.3" r="2.70"/><circle cx="305.4" cy="406.7" r="2.70"/><circle cx="302.9" cy="406.5" r="2.70"/><circle cx="301.1" cy="406.3" r="2.70"/><circle cx="299.2" cy="406.1" r="2.70"/><circle cx="295.5" cy="404.9" r="2.70"/><circle cx="291.9" cy="404.3" r="2.70"/><circle cx="289.6" cy="404.6" r="2.70"/><circle cx="287.7" cy="403.3" r="2.70"/><circle cx="284.3" cy="402.1" r="2.70"/><circle cx="281.1" cy="401.2" r="2.70"/><circle cx="278.1" cy="400.0" r="2.70"/><circle cx="276.2" cy="399.8" r="2.70"/><circle cx="273.9" cy="399.3" r="2.70"/><circle cx="270.7" cy="397.8" r="2.70"/><circle cx="268.5" cy="396.2" r="2.70"/><circle cx="264.6" cy="395.0" r="2.70"/><circle cx="262.8" cy="394.5" r="2.70"/><circle cx="260.2" cy="393.0" r="2.70"/><circle cx="252.1" cy="388.8" r="2.70"/><circle cx="248.8" cy="387.1" r="2.70"/><circle cx="244.8" cy="385.6" r="2.70"/><circle cx="241.8" cy="382.8" r="2.70"/><circle cx="240.0" cy="382.6" r="2.70"/><circle cx="238.1" cy="380.9" r="2.70"/><circle cx="235.2" cy="378.7" r="2.70"/><circle cx="232.8" cy="377.7" r="2.70"/><circle cx="231.0" cy="377.0" r="2.70"/><circle cx="228.8" cy="373.9" r="2.70"/><circle cx="222.3" cy="369.1" r="2.70"/><circle cx="220.4" cy="367.2" r="2.70"/><circle cx="217.7" cy="365.1" r="2.70"/><circle cx="214.8" cy="363.6" r="2.70"/><circle cx="212.7" cy="361.7" r="2.70"/><circle cx="211.5" cy="360.8" r="2.70"/><circle cx="210.6" cy="358.3" r="2.70"/><circle cx="208.2" cy="356.0" r="2.70"/><circle cx="206.2" cy="355.4" r="2.70"/><circle cx="203.3" cy="352.3" r="2.70"/><circle cx="195.9" cy="343.0" r="2.70"/><circle cx="193.5" cy="339.8" r="2.70"/><circle cx="185.4" cy="328.9" r="2.70"/><circle cx="183.1" cy="326.1" r="2.70"/><circle cx="181.6" cy="323.1" r="2.70"/><circle cx="175.8" cy="312.7" r="2.70"/><circle cx="174.2" cy="308.7" r="2.70"/><circle cx="172.8" cy="307.6" r="2.70"/><circle cx="172.0" cy="305.4" r="2.70"/><circle cx="170.6" cy="302.3" r="2.70"/><circle cx="170.2" cy="300.7" r="2.70"/><circle cx="169.4" cy="298.7" r="2.70"/><circle cx="167.6" cy="295.6" r="2.70"/><circle cx="167.0" cy="293.4" r="2.70"/><circle cx="165.7" cy="289.3" r="2.70"/><circle cx="164.6" cy="285.3" r="2.70"/><circle cx="163.0" cy="283.2" r="2.70"/><circle cx="162.7" cy="279.3" r="2.70"/><circle cx="161.4" cy="276.2" r="2.70"/><circle cx="160.9" cy="272.3" r="2.70"/><circle cx="160.2" cy="269.8" r="2.70"/><circle cx="158.4" cy="261.0" r="2.70"/><circle cx="158.0" cy="258.2" r="2.70"/><circle cx="157.2" cy="255.4" r="2.70"/><circle cx="157.4" cy="253.6" r="2.70"/><circle cx="156.9" cy="249.9" r="2.70"/><circle cx="155.7" cy="245.6" r="2.70"/><circle cx="155.2" cy="235.2" r="2.70"/><circle cx="155.7" cy="232.1" r="2.70"/><circle cx="154.8" cy="228.6" r="2.70"/><circle cx="155.4" cy="225.2" r="2.70"/><circle cx="155.7" cy="223.3" r="2.70"/><circle cx="155.5" cy="219.3" r="2.70"/><circle cx="155.0" cy="215.8" r="2.70"/><circle cx="155.2" cy="213.8" r="2.70"/><circle cx="156.2" cy="210.2" r="2.70"/><circle cx="156.6" cy="206.2" r="2.70"/><circle cx="157.0" cy="203.1" r="2.70"/><circle cx="157.8" cy="201.0" r="2.70"/><circle cx="157.2" cy="197.4" r="2.70"/><circle cx="157.8" cy="193.3" r="2.70"/><circle cx="159.5" cy="190.5" r="2.70"/><circle cx="160.3" cy="187.4" r="2.70"/><circle cx="160.3" cy="185.4" r="2.70"/><circle cx="161.3" cy="183.8" r="2.70"/><circle cx="160.9" cy="181.5" r="2.70"/><circle cx="164.5" cy="169.1" r="2.70"/><circle cx="166.1" cy="166.8" r="2.70"/><circle cx="167.0" cy="163.9" r="2.70"/><circle cx="167.7" cy="161.1" r="2.70"/><circle cx="170.0" cy="157.5" r="2.70"/><circle cx="170.6" cy="154.7" r="2.70"/><circle cx="172.1" cy="153.1" r="2.70"/><circle cx="172.2" cy="149.9" r="2.70"/><circle cx="174.0" cy="146.2" r="2.70"/><circle cx="175.7" cy="143.3" r="2.70"/><circle cx="181.8" cy="133.3" r="2.70"/><circle cx="183.1" cy="130.3" r="2.70"/><circle cx="185.7" cy="127.9" r="2.70"/><circle cx="188.4" cy="124.7" r="2.70"/><circle cx="190.0" cy="121.5" r="2.70"/><circle cx="197.2" cy="112.4" r="2.70"/><circle cx="198.8" cy="110.2" r="2.70"/><circle cx="201.0" cy="108.5" r="2.70"/><circle cx="203.4" cy="105.0" r="2.70"/><circle cx="212.8" cy="96.1" r="2.70"/><circle cx="220.9" cy="89.0" r="2.70"/><circle cx="223.3" cy="87.0" r="2.70"/><circle cx="224.5" cy="85.6" r="2.70"/><circle cx="226.0" cy="84.6" r="2.70"/><circle cx="233.8" cy="78.2" r="2.70"/><circle cx="236.9" cy="76.3" r="2.70"/><circle cx="240.7" cy="73.9" r="2.70"/><circle cx="252.0" cy="68.0" r="2.70"/><circle cx="255.8" cy="65.8" r="2.70"/><circle cx="257.4" cy="64.6" r="2.70"/><circle cx="265.5" cy="61.6" r="2.70"/><circle cx="276.0" cy="57.7" r="2.70"/><circle cx="279.3" cy="56.3" r="2.70"/><circle cx="282.3" cy="54.7" r="2.70"/><circle cx="286.4" cy="53.4" r="2.70"/><circle cx="290.2" cy="53.2" r="2.70"/><circle cx="293.5" cy="51.6" r="2.70"/><circle cx="296.1" cy="51.1" r="2.70"/><circle cx="299.9" cy="51.3" r="2.70"/><circle cx="301.5" cy="50.3" r="2.70"/><circle cx="303.2" cy="49.4" r="2.70"/><circle cx="305.6" cy="50.0" r="2.70"/><circle cx="309.5" cy="48.8" r="2.70"/><circle cx="311.1" cy="49.2" r="2.70"/><circle cx="313.1" cy="48.4" r="2.70"/><circle cx="316.6" cy="48.2" r="2.70"/><circle cx="320.7" cy="47.5" r="2.70"/><circle cx="324.6" cy="46.7" r="2.70"/><circle cx="334.0" cy="47.4" r="2.70"/><circle cx="338.1" cy="46.5" r="2.70"/><circle cx="346.4" cy="46.7" r="2.70"/><circle cx="349.1" cy="47.4" r="2.70"/><circle cx="353.1" cy="47.8" r="2.70"/><circle cx="356.4" cy="48.6" r="2.70"/><circle cx="358.6" cy="47.7" r="2.70"/><circle cx="360.1" cy="48.9" r="2.70"/><circle cx="363.1" cy="48.7" r="2.70"/><circle cx="365.5" cy="49.9" r="2.70"/><circle cx="367.9" cy="50.3" r="2.70"/><circle cx="372.3" cy="51.1" r="2.70"/><circle cx="375.8" cy="51.5" r="2.70"/><circle cx="378.7" cy="52.2" r="2.70"/><circle cx="381.9" cy="52.0" r="2.70"/><circle cx="383.4" cy="52.9" r="2.70"/><circle cx="387.4" cy="53.8" r="2.70"/><circle cx="390.5" cy="55.3" r="2.70"/><circle cx="394.4" cy="55.8" r="2.70"/><circle cx="397.5" cy="57.7" r="2.70"/><circle cx="401.1" cy="58.7" r="2.70"/><circle cx="403.5" cy="59.6" r="2.70"/><circle cx="404.9" cy="60.5" r="2.70"/><circle cx="409.1" cy="62.0" r="2.70"/><circle cx="411.0" cy="63.3" r="2.70"/><circle cx="412.6" cy="64.3" r="2.70"/><circle cx="415.5" cy="65.0" r="2.70"/><circle cx="417.5" cy="66.4" r="2.70"/><circle cx="425.6" cy="70.5" r="2.70"/><circle cx="428.8" cy="71.3" r="2.70"/><circle cx="432.2" cy="73.9" r="2.70"/><circle cx="439.1" cy="78.4" r="2.70"/><circle cx="441.3" cy="79.7" r="2.70"/><circle cx="444.1" cy="82.9" r="2.70"/><circle cx="447.6" cy="85.2" r="2.70"/><circle cx="448.8" cy="86.3" r="2.70"/><circle cx="451.6" cy="88.5" r="2.70"/><circle cx="453.6" cy="89.4" r="2.70"/><circle cx="455.8" cy="92.1" r="2.70"/><circle cx="459.5" cy="94.6" r="2.70"/><circle cx="468.8" cy="103.2" r="2.70"/><circle cx="469.4" cy="105.2" r="2.70"/><circle cx="472.6" cy="107.9" r="2.70"/><circle cx="473.7" cy="109.8" r="2.70"/><circle cx="476.0" cy="112.3" r="2.70"/><circle cx="477.2" cy="114.6" r="2.70"/><circle cx="478.9" cy="115.3" r="2.70"/><circle cx="480.7" cy="117.7" r="2.70"/><circle cx="481.8" cy="120.5" r="2.70"/><circle cx="484.7" cy="122.3" r="2.70"/><circle cx="490.7" cy="131.9" r="2.70"/><circle cx="491.0" cy="133.8" r="2.70"/><circle cx="492.9" cy="137.1" r="2.70"/><circle cx="494.8" cy="139.2" r="2.70"/><circle cx="496.5" cy="141.9" r="2.70"/><circle cx="497.8" cy="144.1" r="2.70"/><circle cx="499.4" cy="147.3" r="2.70"/><circle cx="500.5" cy="149.5" r="2.70"/><circle cx="501.1" cy="152.3" r="2.70"/><circle cx="502.7" cy="156.4" r="2.70"/><circle cx="507.2" cy="165.7" r="2.70"/><circle cx="508.5" cy="168.0" r="2.70"/><circle cx="508.6" cy="171.9" r="2.70"/><circle cx="510.8" cy="179.5" r="2.70"/><circle cx="511.8" cy="182.5" r="2.70"/><circle cx="512.4" cy="185.0" r="2.70"/><circle cx="514.3" cy="188.4" r="2.70"/><circle cx="514.5" cy="190.0" r="2.70"/><circle cx="515.0" cy="194.4" r="2.70"/><circle cx="515.8" cy="196.9" r="2.70"/><circle cx="516.4" cy="199.3" r="2.70"/><circle cx="516.8" cy="211.5" r="2.70"/><circle cx="518.1" cy="214.1" r="2.70"/><circle cx="518.0" cy="225.0" r="2.70"/></g>
<g class="d3" fill="#1ca6e4" fill-opacity="0.8" stroke="#157cab" stroke-opacity="0.55" stroke-width="0.7"><circle cx="525.8" cy="297.8" r="2.70"/><circle cx="525.2" cy="299.6" r="2.70"/><circle cx="524.7" cy="301.5" r="2.70"/><circle cx="524.0" cy="305.4" r="2.70"/><circle cx="522.5" cy="306.6" r="2.70"/><circle cx="520.7" cy="310.0" r="2.70"/><circle cx="520.3" cy="312.4" r="2.70"/><circle cx="517.9" cy="319.1" r="2.70"/><circle cx="514.8" cy="322.5" r="2.70"/><circle cx="514.2" cy="324.5" r="2.70"/><circle cx="512.0" cy="327.6" r="2.70"/><circle cx="510.4" cy="330.4" r="2.70"/><circle cx="509.7" cy="333.7" r="2.70"/><circle cx="508.6" cy="335.7" r="2.70"/><circle cx="505.7" cy="338.5" r="2.70"/><circle cx="504.1" cy="340.4" r="2.70"/><circle cx="498.3" cy="349.4" r="2.70"/><circle cx="496.2" cy="351.2" r="2.70"/><circle cx="494.5" cy="354.6" r="2.70"/><circle cx="492.6" cy="357.9" r="2.70"/><circle cx="489.4" cy="360.4" r="2.70"/><circle cx="488.1" cy="363.1" r="2.70"/><circle cx="485.6" cy="364.7" r="2.70"/><circle cx="481.9" cy="367.8" r="2.70"/><circle cx="479.0" cy="371.3" r="2.70"/><circle cx="477.0" cy="373.3" r="2.70"/><circle cx="476.1" cy="375.2" r="2.70"/><circle cx="472.1" cy="377.5" r="2.70"/><circle cx="470.7" cy="379.9" r="2.70"/><circle cx="469.0" cy="381.9" r="2.70"/><circle cx="459.2" cy="389.7" r="2.70"/><circle cx="456.5" cy="391.9" r="2.70"/><circle cx="453.4" cy="393.7" r="2.70"/><circle cx="449.9" cy="395.6" r="2.70"/><circle cx="447.2" cy="397.9" r="2.70"/><circle cx="444.0" cy="399.6" r="2.70"/><circle cx="440.8" cy="401.2" r="2.70"/><circle cx="438.4" cy="403.3" r="2.70"/><circle cx="435.4" cy="404.3" r="2.70"/><circle cx="431.6" cy="406.8" r="2.70"/><circle cx="428.8" cy="408.7" r="2.70"/><circle cx="426.9" cy="409.7" r="2.70"/><circle cx="423.6" cy="411.3" r="2.70"/><circle cx="419.2" cy="412.1" r="2.70"/><circle cx="415.7" cy="414.8" r="2.70"/><circle cx="413.5" cy="414.9" r="2.70"/><circle cx="404.8" cy="419.1" r="2.70"/><circle cx="401.6" cy="419.1" r="2.70"/><circle cx="397.3" cy="421.4" r="2.70"/><circle cx="394.4" cy="422.5" r="2.70"/><circle cx="392.3" cy="422.9" r="2.70"/><circle cx="389.0" cy="423.2" r="2.70"/><circle cx="386.5" cy="424.1" r="2.70"/><circle cx="378.3" cy="426.3" r="2.70"/><circle cx="370.2" cy="428.0" r="2.70"/><circle cx="367.5" cy="427.8" r="2.70"/><circle cx="365.7" cy="428.6" r="2.70"/><circle cx="363.4" cy="428.6" r="2.70"/><circle cx="359.8" cy="429.0" r="2.70"/><circle cx="349.7" cy="429.9" r="2.70"/><circle cx="347.1" cy="430.1" r="2.70"/><circle cx="342.9" cy="430.2" r="2.70"/><circle cx="339.5" cy="431.1" r="2.70"/><circle cx="334.8" cy="430.8" r="2.70"/><circle cx="331.1" cy="430.2" r="2.70"/><circle cx="318.6" cy="429.5" r="2.70"/><circle cx="315.3" cy="429.9" r="2.70"/><circle cx="313.7" cy="429.3" r="2.70"/><circle cx="310.6" cy="429.3" r="2.70"/><circle cx="307.5" cy="428.9" r="2.70"/><circle cx="304.5" cy="427.9" r="2.70"/><circle cx="300.7" cy="427.6" r="2.70"/><circle cx="299.0" cy="427.2" r="2.70"/><circle cx="295.0" cy="426.6" r="2.70"/><circle cx="293.0" cy="425.1" r="2.70"/><circle cx="291.1" cy="424.7" r="2.70"/><circle cx="287.8" cy="423.9" r="2.70"/><circle cx="283.9" cy="423.5" r="2.70"/><circle cx="272.4" cy="419.9" r="2.70"/><circle cx="267.7" cy="418.9" r="2.70"/><circle cx="266.0" cy="417.5" r="2.70"/><circle cx="264.2" cy="417.8" r="2.70"/><circle cx="262.2" cy="416.0" r="2.70"/><circle cx="258.1" cy="414.7" r="2.70"/><circle cx="255.6" cy="412.9" r="2.70"/><circle cx="251.2" cy="412.0" r="2.70"/><circle cx="249.4" cy="410.2" r="2.70"/><circle cx="239.6" cy="405.5" r="2.70"/><circle cx="236.7" cy="404.2" r="2.70"/><circle cx="233.4" cy="401.6" r="2.70"/><circle cx="230.6" cy="399.7" r="2.70"/><circle cx="227.5" cy="398.4" r="2.70"/><circle cx="225.4" cy="396.8" r="2.70"/><circle cx="223.0" cy="395.9" r="2.70"/><circle cx="220.3" cy="393.6" r="2.70"/><circle cx="217.5" cy="392.3" r="2.70"/><circle cx="209.6" cy="385.9" r="2.70"/><circle cx="200.1" cy="376.6" r="2.70"/><circle cx="197.7" cy="376.0" r="2.70"/><circle cx="195.1" cy="372.7" r="2.70"/><circle cx="192.7" cy="369.8" r="2.70"/><circle cx="189.8" cy="366.6" r="2.70"/><circle cx="188.4" cy="364.9" r="2.70"/><circle cx="179.1" cy="356.0" r="2.70"/><circle cx="177.6" cy="352.5" r="2.70"/><circle cx="175.4" cy="349.4" r="2.70"/><circle cx="168.6" cy="339.5" r="2.70"/><circle cx="167.0" cy="337.5" r="2.70"/><circle cx="165.2" cy="335.6" r="2.70"/><circle cx="163.1" cy="331.6" r="2.70"/><circle cx="161.5" cy="330.1" r="2.70"/><circle cx="161.0" cy="327.1" r="2.70"/><circle cx="159.0" cy="324.0" r="2.70"/><circle cx="157.9" cy="322.5" r="2.70"/><circle cx="156.2" cy="320.0" r="2.70"/><circle cx="151.4" cy="307.9" r="2.70"/><circle cx="148.5" cy="303.9" r="2.70"/><circle cx="148.4" cy="301.2" r="2.70"/><circle cx="146.5" cy="298.5" r="2.70"/><circle cx="143.2" cy="288.5" r="2.70"/><circle cx="143.3" cy="285.0" r="2.70"/><circle cx="141.5" cy="282.9" r="2.70"/><circle cx="140.8" cy="280.7" r="2.70"/><circle cx="138.2" cy="269.6" r="2.70"/><circle cx="137.7" cy="265.0" r="2.70"/><circle cx="136.5" cy="255.6" r="2.70"/><circle cx="136.4" cy="251.6" r="2.70"/><circle cx="136.3" cy="249.1" r="2.70"/><circle cx="135.4" cy="247.3" r="2.70"/><circle cx="135.2" cy="243.8" r="2.70"/><circle cx="135.2" cy="233.0" r="2.70"/><circle cx="134.5" cy="231.0" r="2.70"/><circle cx="134.4" cy="228.2" r="2.70"/><circle cx="134.0" cy="226.1" r="2.70"/><circle cx="134.2" cy="221.8" r="2.70"/><circle cx="135.4" cy="219.7" r="2.70"/><circle cx="134.9" cy="217.7" r="2.70"/><circle cx="135.0" cy="215.8" r="2.70"/><circle cx="135.2" cy="212.5" r="2.70"/><circle cx="135.6" cy="210.2" r="2.70"/><circle cx="136.0" cy="208.3" r="2.70"/><circle cx="135.4" cy="205.0" r="2.70"/><circle cx="138.1" cy="191.3" r="2.70"/><circle cx="138.4" cy="187.9" r="2.70"/><circle cx="140.0" cy="184.2" r="2.70"/><circle cx="140.1" cy="182.5" r="2.70"/><circle cx="140.0" cy="179.8" r="2.70"/><circle cx="143.9" cy="169.3" r="2.70"/><circle cx="144.5" cy="165.1" r="2.70"/><circle cx="147.6" cy="156.9" r="2.70"/><circle cx="148.2" cy="155.3" r="2.70"/><circle cx="150.1" cy="151.5" r="2.70"/><circle cx="150.5" cy="148.4" r="2.70"/><circle cx="157.1" cy="136.1" r="2.70"/><circle cx="158.2" cy="134.6" r="2.70"/><circle cx="160.1" cy="131.3" r="2.70"/><circle cx="161.0" cy="129.5" r="2.70"/><circle cx="161.4" cy="126.7" r="2.70"/><circle cx="164.1" cy="123.4" r="2.70"/><circle cx="165.8" cy="119.7" r="2.70"/><circle cx="168.6" cy="117.1" r="2.70"/><circle cx="170.3" cy="113.1" r="2.70"/><circle cx="178.1" cy="103.7" r="2.70"/><circle cx="180.7" cy="99.7" r="2.70"/><circle cx="181.8" cy="98.0" r="2.70"/><circle cx="184.8" cy="94.7" r="2.70"/><circle cx="187.8" cy="91.7" r="2.70"/><circle cx="190.5" cy="88.4" r="2.70"/><circle cx="192.1" cy="86.4" r="2.70"/><circle cx="196.2" cy="84.0" r="2.70"/><circle cx="199.1" cy="81.0" r="2.70"/><circle cx="200.8" cy="79.5" r="2.70"/><circle cx="202.3" cy="77.6" r="2.70"/><circle cx="205.0" cy="74.9" r="2.70"/><circle cx="208.0" cy="72.2" r="2.70"/><circle cx="211.6" cy="69.2" r="2.70"/><circle cx="213.2" cy="68.3" r="2.70"/><circle cx="215.4" cy="66.7" r="2.70"/><circle cx="219.3" cy="64.9" r="2.70"/><circle cx="220.5" cy="63.9" r="2.70"/><circle cx="222.5" cy="61.6" r="2.70"/><circle cx="225.1" cy="60.6" r="2.70"/><circle cx="228.4" cy="57.8" r="2.70"/><circle cx="230.2" cy="57.2" r="2.70"/><circle cx="232.5" cy="55.1" r="2.70"/><circle cx="234.2" cy="54.1" r="2.70"/><circle cx="245.9" cy="48.5" r="2.70"/><circle cx="250.0" cy="46.2" r="2.70"/><circle cx="425.9" cy="47.0" r="2.70"/><circle cx="428.5" cy="48.2" r="2.70"/><circle cx="430.5" cy="49.1" r="2.70"/><circle cx="433.3" cy="50.9" r="2.70"/><circle cx="434.8" cy="52.3" r="2.70"/><circle cx="443.6" cy="57.1" r="2.70"/><circle cx="446.8" cy="59.1" r="2.70"/><circle cx="449.4" cy="61.3" r="2.70"/><circle cx="453.2" cy="63.0" r="2.70"/><circle cx="456.2" cy="65.3" r="2.70"/><circle cx="459.9" cy="67.8" r="2.70"/><circle cx="463.1" cy="70.7" r="2.70"/><circle cx="464.7" cy="71.9" r="2.70"/><circle cx="467.0" cy="74.7" r="2.70"/><circle cx="476.0" cy="81.7" r="2.70"/><circle cx="477.1" cy="83.9" r="2.70"/><circle cx="486.1" cy="91.7" r="2.70"/><circle cx="487.7" cy="94.0" r="2.70"/><circle cx="495.7" cy="104.4" r="2.70"/><circle cx="502.3" cy="113.9" r="2.70"/><circle cx="503.7" cy="115.1" r="2.70"/><circle cx="505.5" cy="118.9" r="2.70"/><circle cx="506.8" cy="120.4" r="2.70"/><circle cx="508.3" cy="122.6" r="2.70"/><circle cx="510.1" cy="124.2" r="2.70"/><circle cx="512.3" cy="127.9" r="2.70"/><circle cx="513.1" cy="129.4" r="2.70"/><circle cx="517.6" cy="139.1" r="2.70"/><circle cx="522.8" cy="149.5" r="2.70"/><circle cx="523.7" cy="152.3" r="2.70"/><circle cx="525.0" cy="154.2" r="2.70"/><circle cx="526.6" cy="158.1" r="2.70"/><circle cx="527.0" cy="163.0" r="2.70"/><circle cx="528.2" cy="164.7" r="2.70"/><circle cx="529.4" cy="168.4" r="2.70"/><circle cx="530.0" cy="170.5" r="2.70"/></g>
<g class="d4" fill="#e8461c" fill-opacity="0.8" stroke="#ae3415" stroke-opacity="0.55" stroke-width="0.7"><circle cx="528.7" cy="318.1" r="2.70"/><circle cx="527.2" cy="320.6" r="2.70"/><circle cx="525.6" cy="323.8" r="2.70"/><circle cx="522.3" cy="330.8" r="2.70"/><circle cx="520.3" cy="331.6" r="2.70"/><circle cx="518.2" cy="335.7" r="2.70"/><circle cx="516.4" cy="339.9" r="2.70"/><circle cx="514.5" cy="341.6" r="2.70"/><circle cx="507.4" cy="351.9" r="2.70"/><circle cx="505.2" cy="355.1" r="2.70"/><circle cx="504.3" cy="357.1" r="2.70"/><circle cx="496.7" cy="367.3" r="2.70"/><circle cx="495.6" cy="368.5" r="2.70"/><circle cx="492.4" cy="371.3" r="2.70"/><circle cx="490.3" cy="374.1" r="2.70"/><circle cx="484.8" cy="379.2" r="2.70"/><circle cx="482.3" cy="380.6" r="2.70"/><circle cx="481.8" cy="382.6" r="2.70"/><circle cx="478.9" cy="384.0" r="2.70"/><circle cx="477.5" cy="385.8" r="2.70"/><circle cx="466.8" cy="395.0" r="2.70"/><circle cx="465.5" cy="396.4" r="2.70"/><circle cx="461.5" cy="398.2" r="2.70"/><circle cx="460.0" cy="400.5" r="2.70"/><circle cx="457.2" cy="402.8" r="2.70"/><circle cx="455.2" cy="402.7" r="2.70"/><circle cx="445.4" cy="409.8" r="2.70"/><circle cx="442.7" cy="411.1" r="2.70"/><circle cx="439.8" cy="413.5" r="2.70"/><circle cx="436.2" cy="415.5" r="2.70"/><circle cx="432.2" cy="416.2" r="2.70"/><circle cx="428.5" cy="418.6" r="2.70"/><circle cx="426.9" cy="420.2" r="2.70"/><circle cx="423.0" cy="421.0" r="2.70"/><circle cx="420.5" cy="422.1" r="2.70"/><circle cx="411.4" cy="426.8" r="2.70"/><circle cx="407.0" cy="428.1" r="2.70"/><circle cx="402.4" cy="429.7" r="2.70"/><circle cx="400.0" cy="429.9" r="2.70"/><circle cx="391.8" cy="433.0" r="2.70"/><circle cx="389.2" cy="433.5" r="2.70"/><circle cx="384.9" cy="434.6" r="2.70"/><circle cx="383.0" cy="435.1" r="2.70"/><circle cx="379.4" cy="435.2" r="2.70"/><circle cx="374.7" cy="435.9" r="2.70"/><circle cx="371.2" cy="437.0" r="2.70"/><circle cx="368.4" cy="438.0" r="2.70"/><circle cx="363.6" cy="437.5" r="2.70"/><circle cx="361.2" cy="438.9" r="2.70"/><circle cx="352.3" cy="439.5" r="2.70"/><circle cx="350.1" cy="439.3" r="2.70"/><circle cx="346.4" cy="439.9" r="2.70"/><circle cx="343.9" cy="439.3" r="2.70"/><circle cx="331.9" cy="439.3" r="2.70"/><circle cx="327.2" cy="439.8" r="2.70"/><circle cx="323.5" cy="439.5" r="2.70"/><circle cx="321.0" cy="438.6" r="2.70"/><circle cx="313.9" cy="438.4" r="2.70"/><circle cx="312.0" cy="438.3" r="2.70"/><circle cx="308.2" cy="437.6" r="2.70"/><circle cx="306.1" cy="437.0" r="2.70"/><circle cx="303.1" cy="437.4" r="2.70"/><circle cx="299.4" cy="435.9" r="2.70"/><circle cx="296.6" cy="436.4" r="2.70"/><circle cx="284.0" cy="432.8" r="2.70"/><circle cx="279.8" cy="432.3" r="2.70"/><circle cx="278.4" cy="431.2" r="2.70"/><circle cx="276.2" cy="431.2" r="2.70"/><circle cx="272.9" cy="429.5" r="2.70"/><circle cx="270.7" cy="430.0" r="2.70"/><circle cx="267.4" cy="428.3" r="2.70"/><circle cx="266.0" cy="426.9" r="2.70"/><circle cx="263.6" cy="427.5" r="2.70"/><circle cx="260.4" cy="425.0" r="2.70"/><circle cx="258.0" cy="424.4" r="2.70"/><circle cx="256.3" cy="423.6" r="2.70"/><circle cx="253.9" cy="422.8" r="2.70"/><circle cx="251.9" cy="421.6" r="2.70"/><circle cx="249.2" cy="420.7" r="2.70"/><circle cx="246.1" cy="420.0" r="2.70"/><circle cx="235.5" cy="414.6" r="2.70"/><circle cx="234.3" cy="413.3" r="2.70"/><circle cx="225.2" cy="408.4" r="2.70"/><circle cx="218.7" cy="403.8" r="2.70"/><circle cx="216.8" cy="402.5" r="2.70"/><circle cx="215.4" cy="401.4" r="2.70"/><circle cx="211.5" cy="398.9" r="2.70"/><circle cx="204.5" cy="393.9" r="2.70"/><circle cx="200.9" cy="391.3" r="2.70"/><circle cx="199.4" cy="390.0" r="2.70"/><circle cx="198.3" cy="387.7" r="2.70"/><circle cx="196.7" cy="386.1" r="2.70"/><circle cx="193.0" cy="383.4" r="2.70"/><circle cx="191.6" cy="382.1" r="2.70"/><circle cx="189.8" cy="380.8" r="2.70"/><circle cx="188.1" cy="379.7" r="2.70"/><circle cx="187.5" cy="377.2" r="2.70"/><circle cx="185.2" cy="374.9" r="2.70"/><circle cx="182.0" cy="372.6" r="2.70"/><circle cx="179.7" cy="370.3" r="2.70"/><circle cx="178.1" cy="368.9" r="2.70"/><circle cx="175.5" cy="366.0" r="2.70"/><circle cx="173.3" cy="361.9" r="2.70"/><circle cx="170.3" cy="359.8" r="2.70"/><circle cx="166.1" cy="352.2" r="2.70"/><circle cx="164.7" cy="350.7" r="2.70"/><circle cx="161.9" cy="348.5" r="2.70"/><circle cx="160.9" cy="344.6" r="2.70"/><circle cx="159.0" cy="343.0" r="2.70"/><circle cx="156.6" cy="339.1" r="2.70"/><circle cx="155.0" cy="335.8" r="2.70"/><circle cx="153.0" cy="334.4" r="2.70"/><circle cx="151.9" cy="332.4" r="2.70"/><circle cx="151.2" cy="329.4" r="2.70"/><circle cx="150.4" cy="328.0" r="2.70"/><circle cx="148.9" cy="324.0" r="2.70"/><circle cx="147.2" cy="322.1" r="2.70"/><circle cx="145.9" cy="318.4" r="2.70"/><circle cx="144.1" cy="317.1" r="2.70"/><circle cx="143.8" cy="315.0" r="2.70"/><circle cx="142.6" cy="310.7" r="2.70"/><circle cx="141.1" cy="309.0" r="2.70"/><circle cx="139.6" cy="306.4" r="2.70"/><circle cx="138.0" cy="302.4" r="2.70"/><circle cx="137.1" cy="297.8" r="2.70"/><circle cx="133.5" cy="284.6" r="2.70"/><circle cx="131.0" cy="275.9" r="2.70"/><circle cx="129.9" cy="271.6" r="2.70"/><circle cx="128.5" cy="267.5" r="2.70"/><circle cx="128.9" cy="264.2" r="2.70"/><circle cx="127.6" cy="260.6" r="2.70"/><circle cx="126.5" cy="256.2" r="2.70"/><circle cx="126.3" cy="254.4" r="2.70"/><circle cx="126.4" cy="252.2" r="2.70"/><circle cx="126.6" cy="249.8" r="2.70"/><circle cx="126.6" cy="246.0" r="2.70"/><circle cx="125.8" cy="242.5" r="2.70"/><circle cx="126.2" cy="238.3" r="2.70"/><circle cx="125.1" cy="234.6" r="2.70"/><circle cx="124.7" cy="232.4" r="2.70"/><circle cx="125.4" cy="230.0" r="2.70"/><circle cx="125.4" cy="227.8" r="2.70"/><circle cx="125.7" cy="223.3" r="2.70"/><circle cx="125.2" cy="220.5" r="2.70"/><circle cx="125.9" cy="218.6" r="2.70"/><circle cx="126.3" cy="216.1" r="2.70"/><circle cx="126.0" cy="213.2" r="2.70"/><circle cx="126.4" cy="201.9" r="2.70"/><circle cx="127.0" cy="199.3" r="2.70"/><circle cx="127.7" cy="197.2" r="2.70"/><circle cx="130.2" cy="185.5" r="2.70"/><circle cx="130.4" cy="180.8" r="2.70"/><circle cx="131.4" cy="177.3" r="2.70"/><circle cx="133.2" cy="172.9" r="2.70"/><circle cx="133.8" cy="170.4" r="2.70"/><circle cx="134.0" cy="166.8" r="2.70"/><circle cx="135.9" cy="163.7" r="2.70"/><circle cx="138.8" cy="153.2" r="2.70"/><circle cx="140.4" cy="151.9" r="2.70"/><circle cx="141.8" cy="148.3" r="2.70"/><circle cx="141.9" cy="145.7" r="2.70"/><circle cx="143.3" cy="144.5" r="2.70"/><circle cx="145.2" cy="140.2" r="2.70"/><circle cx="146.4" cy="137.1" r="2.70"/><circle cx="147.8" cy="134.4" r="2.70"/><circle cx="151.4" cy="127.7" r="2.70"/><circle cx="156.6" cy="117.3" r="2.70"/><circle cx="158.8" cy="113.8" r="2.70"/><circle cx="161.1" cy="111.6" r="2.70"/><circle cx="163.2" cy="108.9" r="2.70"/><circle cx="165.0" cy="105.5" r="2.70"/><circle cx="165.9" cy="103.3" r="2.70"/><circle cx="167.3" cy="101.9" r="2.70"/><circle cx="169.4" cy="98.7" r="2.70"/><circle cx="171.6" cy="97.4" r="2.70"/><circle cx="173.7" cy="94.7" r="2.70"/><circle cx="175.9" cy="92.1" r="2.70"/><circle cx="177.3" cy="90.2" r="2.70"/><circle cx="179.0" cy="87.3" r="2.70"/><circle cx="188.0" cy="78.9" r="2.70"/><circle cx="190.1" cy="75.8" r="2.70"/><circle cx="193.9" cy="73.3" r="2.70"/><circle cx="196.6" cy="70.7" r="2.70"/><circle cx="197.8" cy="68.7" r="2.70"/><circle cx="200.6" cy="65.9" r="2.70"/><circle cx="203.2" cy="65.0" r="2.70"/><circle cx="204.3" cy="63.5" r="2.70"/><circle cx="210.2" cy="59.1" r="2.70"/><circle cx="213.6" cy="56.0" r="2.70"/><circle cx="216.1" cy="55.6" r="2.70"/><circle cx="218.6" cy="53.5" r="2.70"/><circle cx="221.0" cy="51.2" r="2.70"/><circle cx="227.7" cy="47.6" r="2.70"/><circle cx="229.5" cy="46.1" r="2.70"/><circle cx="444.1" cy="47.0" r="2.70"/><circle cx="447.0" cy="47.6" r="2.70"/><circle cx="448.7" cy="48.7" r="2.70"/><circle cx="457.7" cy="55.5" r="2.70"/><circle cx="459.9" cy="57.6" r="2.70"/><circle cx="463.8" cy="59.3" r="2.70"/><circle cx="465.6" cy="60.8" r="2.70"/><circle cx="467.6" cy="62.0" r="2.70"/><circle cx="469.5" cy="64.4" r="2.70"/><circle cx="472.8" cy="67.5" r="2.70"/><circle cx="475.3" cy="68.7" r="2.70"/><circle cx="477.6" cy="71.2" r="2.70"/><circle cx="479.6" cy="72.1" r="2.70"/><circle cx="481.9" cy="74.6" r="2.70"/><circle cx="485.0" cy="77.9" r="2.70"/><circle cx="487.8" cy="81.2" r="2.70"/><circle cx="489.1" cy="83.2" r="2.70"/><circle cx="493.0" cy="85.6" r="2.70"/><circle cx="495.2" cy="88.0" r="2.70"/><circle cx="496.3" cy="89.8" r="2.70"/><circle cx="498.2" cy="92.1" r="2.70"/><circle cx="499.6" cy="94.2" r="2.70"/><circle cx="501.2" cy="96.9" r="2.70"/><circle cx="507.6" cy="103.9" r="2.70"/><circle cx="508.5" cy="106.1" r="2.70"/><circle cx="510.1" cy="107.6" r="2.70"/><circle cx="511.3" cy="109.5" r="2.70"/><circle cx="513.7" cy="112.7" r="2.70"/><circle cx="515.2" cy="114.7" r="2.70"/><circle cx="516.3" cy="116.1" r="2.70"/><circle cx="516.2" cy="118.4" r="2.70"/><circle cx="518.2" cy="121.5" r="2.70"/><circle cx="521.1" cy="124.1" r="2.70"/><circle cx="522.2" cy="128.2" r="2.70"/><circle cx="523.4" cy="129.9" r="2.70"/><circle cx="524.2" cy="132.4" r="2.70"/><circle cx="525.1" cy="134.0" r="2.70"/><circle cx="526.5" cy="136.9" r="2.70"/><circle cx="528.8" cy="139.1" r="2.70"/></g>
<g class="d5" fill="#1eb0e6" fill-opacity="0.8" stroke="#1684ac" stroke-opacity="0.55" stroke-width="0.7"><circle cx="529.8" cy="348.4" r="2.70"/><circle cx="526.9" cy="351.9" r="2.70"/><circle cx="524.8" cy="355.3" r="2.70"/><circle cx="523.7" cy="358.8" r="2.70"/><circle cx="522.0" cy="361.2" r="2.70"/><circle cx="513.7" cy="370.3" r="2.70"/><circle cx="513.3" cy="372.5" r="2.70"/><circle cx="510.1" cy="374.9" r="2.70"/><circle cx="507.6" cy="377.6" r="2.70"/><circle cx="505.1" cy="380.6" r="2.70"/><circle cx="503.6" cy="382.6" r="2.70"/><circle cx="501.1" cy="386.5" r="2.70"/><circle cx="498.5" cy="388.8" r="2.70"/><circle cx="496.4" cy="391.0" r="2.70"/><circle cx="492.6" cy="393.9" r="2.70"/><circle cx="489.4" cy="396.2" r="2.70"/><circle cx="488.9" cy="398.3" r="2.70"/><circle cx="485.1" cy="400.0" r="2.70"/><circle cx="483.1" cy="402.0" r="2.70"/><circle cx="482.0" cy="403.3" r="2.70"/><circle cx="472.3" cy="411.6" r="2.70"/><circle cx="463.7" cy="417.0" r="2.70"/><circle cx="460.3" cy="419.0" r="2.70"/><circle cx="458.3" cy="420.0" r="2.70"/><circle cx="456.7" cy="421.1" r="2.70"/><circle cx="454.4" cy="422.5" r="2.70"/><circle cx="452.2" cy="424.8" r="2.70"/><circle cx="447.9" cy="426.4" r="2.70"/><circle cx="445.2" cy="429.0" r="2.70"/><circle cx="441.8" cy="430.2" r="2.70"/><circle cx="438.8" cy="431.0" r="2.70"/><circle cx="435.4" cy="433.6" r="2.70"/><circle cx="433.2" cy="434.3" r="2.70"/><circle cx="429.2" cy="436.9" r="2.70"/><circle cx="425.5" cy="437.9" r="2.70"/><circle cx="423.3" cy="438.2" r="2.70"/><circle cx="420.4" cy="439.5" r="2.70"/><circle cx="417.5" cy="441.4" r="2.70"/><circle cx="415.6" cy="442.3" r="2.70"/><circle cx="411.2" cy="444.0" r="2.70"/><circle cx="407.9" cy="445.1" r="2.70"/><circle cx="404.5" cy="445.3" r="2.70"/><circle cx="396.4" cy="447.4" r="2.70"/><circle cx="393.0" cy="448.9" r="2.70"/><circle cx="389.3" cy="449.5" r="2.70"/><circle cx="385.8" cy="450.6" r="2.70"/><circle cx="382.1" cy="451.1" r="2.70"/><circle cx="379.7" cy="452.4" r="2.70"/><circle cx="374.9" cy="452.0" r="2.70"/><circle cx="364.3" cy="453.8" r="2.70"/><circle cx="362.5" cy="454.9" r="2.70"/><circle cx="358.7" cy="455.4" r="2.70"/><circle cx="354.9" cy="455.5" r="2.70"/><circle cx="347.6" cy="455.5" r="2.70"/><circle cx="345.0" cy="455.8" r="2.70"/><circle cx="335.2" cy="456.5" r="2.70"/><circle cx="331.0" cy="455.1" r="2.70"/><circle cx="328.8" cy="456.2" r="2.70"/><circle cx="315.6" cy="454.6" r="2.70"/><circle cx="312.3" cy="454.4" r="2.70"/><circle cx="309.4" cy="454.5" r="2.70"/><circle cx="296.9" cy="453.1" r="2.70"/><circle cx="293.1" cy="451.4" r="2.70"/><circle cx="290.3" cy="451.4" r="2.70"/><circle cx="285.5" cy="450.8" r="2.70"/><circle cx="282.2" cy="448.8" r="2.70"/><circle cx="278.9" cy="448.3" r="2.70"/><circle cx="276.6" cy="447.3" r="2.70"/><circle cx="274.5" cy="447.4" r="2.70"/><circle cx="272.5" cy="446.7" r="2.70"/><circle cx="269.3" cy="445.6" r="2.70"/><circle cx="267.8" cy="444.6" r="2.70"/><circle cx="265.3" cy="444.8" r="2.70"/><circle cx="261.5" cy="442.8" r="2.70"/><circle cx="251.9" cy="439.4" r="2.70"/><circle cx="248.3" cy="437.6" r="2.70"/><circle cx="244.2" cy="436.2" r="2.70"/><circle cx="240.0" cy="434.5" r="2.70"/><circle cx="238.6" cy="433.1" r="2.70"/><circle cx="236.6" cy="433.0" r="2.70"/><circle cx="234.4" cy="431.6" r="2.70"/><circle cx="232.5" cy="430.1" r="2.70"/><circle cx="229.6" cy="429.8" r="2.70"/><circle cx="227.5" cy="427.5" r="2.70"/><circle cx="220.3" cy="424.5" r="2.70"/><circle cx="218.6" cy="423.1" r="2.70"/><circle cx="210.1" cy="417.2" r="2.70"/><circle cx="200.0" cy="410.7" r="2.70"/><circle cx="198.3" cy="409.3" r="2.70"/><circle cx="195.9" cy="406.4" r="2.70"/><circle cx="194.5" cy="405.5" r="2.70"/><circle cx="192.9" cy="404.0" r="2.70"/><circle cx="189.0" cy="401.2" r="2.70"/><circle cx="186.3" cy="398.6" r="2.70"/><circle cx="183.3" cy="396.3" r="2.70"/><circle cx="181.8" cy="395.2" r="2.70"/><circle cx="179.0" cy="391.6" r="2.70"/><circle cx="176.6" cy="389.5" r="2.70"/><circle cx="173.7" cy="387.8" r="2.70"/><circle cx="170.6" cy="384.5" r="2.70"/><circle cx="169.5" cy="382.7" r="2.70"/><circle cx="166.7" cy="380.1" r="2.70"/><circle cx="164.3" cy="375.9" r="2.70"/><circle cx="161.6" cy="372.8" r="2.70"/><circle cx="159.9" cy="371.9" r="2.70"/><circle cx="158.1" cy="369.8" r="2.70"/><circle cx="156.2" cy="366.4" r="2.70"/><circle cx="154.7" cy="363.8" r="2.70"/><circle cx="146.9" cy="354.8" r="2.70"/><circle cx="145.7" cy="353.0" r="2.70"/><circle cx="145.2" cy="351.0" r="2.70"/><circle cx="144.8" cy="349.4" r="2.70"/><circle cx="141.3" cy="346.4" r="2.70"/><circle cx="139.3" cy="342.3" r="2.70"/><circle cx="137.3" cy="339.4" r="2.70"/><circle cx="135.6" cy="335.1" r="2.70"/><circle cx="134.2" cy="332.1" r="2.70"/><circle cx="132.9" cy="329.6" r="2.70"/><circle cx="132.2" cy="327.4" r="2.70"/><circle cx="130.6" cy="324.6" r="2.70"/><circle cx="129.6" cy="322.7" r="2.70"/><circle cx="127.7" cy="319.1" r="2.70"/><circle cx="127.0" cy="315.8" r="2.70"/><circle cx="125.6" cy="312.9" r="2.70"/><circle cx="124.1" cy="310.4" r="2.70"/><circle cx="123.0" cy="307.4" r="2.70"/><circle cx="122.4" cy="304.4" r="2.70"/><circle cx="121.0" cy="302.0" r="2.70"/><circle cx="121.0" cy="299.6" r="2.70"/><circle cx="119.3" cy="296.3" r="2.70"/><circle cx="118.7" cy="292.4" r="2.70"/><circle cx="116.6" cy="283.3" r="2.70"/><circle cx="114.9" cy="280.3" r="2.70"/><circle cx="114.6" cy="276.1" r="2.70"/><circle cx="113.4" cy="274.4" r="2.70"/><circle cx="113.4" cy="271.1" r="2.70"/><circle cx="112.4" cy="268.1" r="2.70"/><circle cx="111.5" cy="263.9" r="2.70"/><circle cx="111.8" cy="260.9" r="2.70"/><circle cx="111.7" cy="258.7" r="2.70"/><circle cx="110.2" cy="254.3" r="2.70"/><circle cx="109.7" cy="250.0" r="2.70"/><circle cx="109.6" cy="247.7" r="2.70"/><circle cx="109.3" cy="245.8" r="2.70"/><circle cx="109.5" cy="242.9" r="2.70"/><circle cx="109.7" cy="241.2" r="2.70"/><circle cx="109.6" cy="239.6" r="2.70"/><circle cx="109.1" cy="236.9" r="2.70"/><circle cx="110.0" cy="234.7" r="2.70"/><circle cx="109.5" cy="231.1" r="2.70"/><circle cx="108.6" cy="226.8" r="2.70"/><circle cx="109.2" cy="223.3" r="2.70"/><circle cx="109.5" cy="221.6" r="2.70"/><circle cx="109.4" cy="218.1" r="2.70"/><circle cx="109.8" cy="215.8" r="2.70"/><circle cx="109.2" cy="213.0" r="2.70"/><circle cx="110.5" cy="208.4" r="2.70"/><circle cx="110.2" cy="205.9" r="2.70"/><circle cx="110.1" cy="204.2" r="2.70"/><circle cx="110.4" cy="201.8" r="2.70"/><circle cx="112.0" cy="197.2" r="2.70"/><circle cx="111.5" cy="194.7" r="2.70"/><circle cx="112.3" cy="190.5" r="2.70"/><circle cx="113.7" cy="186.5" r="2.70"/><circle cx="114.0" cy="182.5" r="2.70"/><circle cx="114.3" cy="180.7" r="2.70"/><circle cx="115.2" cy="179.2" r="2.70"/><circle cx="117.0" cy="169.9" r="2.70"/><circle cx="117.3" cy="167.4" r="2.70"/><circle cx="119.3" cy="163.0" r="2.70"/><circle cx="120.0" cy="159.9" r="2.70"/><circle cx="120.0" cy="157.5" r="2.70"/><circle cx="121.2" cy="155.1" r="2.70"/><circle cx="122.7" cy="153.0" r="2.70"/><circle cx="123.6" cy="150.4" r="2.70"/><circle cx="124.5" cy="147.2" r="2.70"/><circle cx="126.1" cy="143.2" r="2.70"/><circle cx="127.8" cy="138.8" r="2.70"/><circle cx="128.3" cy="136.7" r="2.70"/><circle cx="129.9" cy="134.1" r="2.70"/><circle cx="131.5" cy="130.3" r="2.70"/><circle cx="132.4" cy="127.7" r="2.70"/><circle cx="136.0" cy="120.0" r="2.70"/><circle cx="138.4" cy="117.0" r="2.70"/><circle cx="139.9" cy="115.3" r="2.70"/><circle cx="141.7" cy="111.9" r="2.70"/><circle cx="142.4" cy="109.9" r="2.70"/><circle cx="144.4" cy="107.4" r="2.70"/><circle cx="145.3" cy="105.6" r="2.70"/><circle cx="146.6" cy="104.0" r="2.70"/><circle cx="148.1" cy="101.0" r="2.70"/><circle cx="150.5" cy="98.5" r="2.70"/><circle cx="152.6" cy="94.7" r="2.70"/><circle cx="154.4" cy="92.6" r="2.70"/><circle cx="156.7" cy="89.0" r="2.70"/><circle cx="164.4" cy="81.0" r="2.70"/><circle cx="166.8" cy="76.8" r="2.70"/><circle cx="170.2" cy="74.1" r="2.70"/><circle cx="172.6" cy="71.9" r="2.70"/><circle cx="173.9" cy="69.0" r="2.70"/><circle cx="176.2" cy="66.6" r="2.70"/><circle cx="179.9" cy="64.0" r="2.70"/><circle cx="187.0" cy="58.0" r="2.70"/><circle cx="195.5" cy="50.8" r="2.70"/><circle cx="197.4" cy="49.1" r="2.70"/><circle cx="200.5" cy="45.7" r="2.70"/><circle cx="475.4" cy="49.0" r="2.70"/><circle cx="476.7" cy="50.0" r="2.70"/><circle cx="478.1" cy="51.2" r="2.70"/><circle cx="480.7" cy="53.2" r="2.70"/><circle cx="483.0" cy="55.0" r="2.70"/><circle cx="486.1" cy="58.0" r="2.70"/><circle cx="488.4" cy="58.3" r="2.70"/><circle cx="490.9" cy="60.8" r="2.70"/><circle cx="496.1" cy="66.1" r="2.70"/><circle cx="498.5" cy="69.2" r="2.70"/><circle cx="500.2" cy="70.7" r="2.70"/><circle cx="502.4" cy="73.3" r="2.70"/><circle cx="504.7" cy="76.2" r="2.70"/><circle cx="506.9" cy="78.4" r="2.70"/><circle cx="509.3" cy="80.6" r="2.70"/><circle cx="511.1" cy="82.8" r="2.70"/><circle cx="513.2" cy="84.2" r="2.70"/><circle cx="516.2" cy="88.0" r="2.70"/><circle cx="518.4" cy="91.6" r="2.70"/><circle cx="521.3" cy="95.5" r="2.70"/><circle cx="522.6" cy="98.7" r="2.70"/><circle cx="524.0" cy="100.3" r="2.70"/><circle cx="525.5" cy="102.0" r="2.70"/><circle cx="526.8" cy="103.4" r="2.70"/></g>
<g class="d6" fill="#e4501c" fill-opacity="0.8" stroke="#ab3c15" stroke-opacity="0.55" stroke-width="0.7"><circle cx="524.8" cy="413.0" r="2.70"/><circle cx="510.1" cy="425.3" r="2.70"/><circle cx="505.8" cy="429.3" r="2.70"/><circle cx="503.7" cy="431.9" r="2.70"/><circle cx="499.5" cy="434.6" r="2.70"/><circle cx="494.7" cy="439.1" r="2.70"/><circle cx="491.8" cy="440.9" r="2.70"/><circle cx="488.9" cy="443.4" r="2.70"/><circle cx="475.9" cy="452.0" r="2.70"/><circle cx="473.6" cy="452.6" r="2.70"/><circle cx="467.9" cy="455.8" r="2.70"/><circle cx="464.7" cy="458.3" r="2.70"/><circle cx="462.3" cy="459.2" r="2.70"/><circle cx="454.3" cy="463.4" r="2.70"/><circle cx="449.8" cy="465.3" r="2.70"/><circle cx="445.7" cy="467.2" r="2.70"/><circle cx="440.3" cy="469.7" r="2.70"/><circle cx="434.9" cy="472.0" r="2.70"/><circle cx="416.0" cy="479.7" r="2.70"/><circle cx="397.9" cy="484.7" r="2.70"/><circle cx="392.1" cy="486.3" r="2.70"/><circle cx="386.2" cy="487.4" r="2.70"/><circle cx="380.9" cy="488.0" r="2.70"/><circle cx="376.0" cy="488.2" r="2.70"/><circle cx="371.4" cy="488.7" r="2.70"/><circle cx="365.2" cy="489.6" r="2.70"/><circle cx="359.9" cy="489.9" r="2.70"/><circle cx="354.3" cy="490.6" r="2.70"/><circle cx="343.0" cy="491.8" r="2.70"/><circle cx="337.0" cy="491.0" r="2.70"/><circle cx="324.7" cy="491.8" r="2.70"/><circle cx="316.5" cy="491.1" r="2.70"/><circle cx="299.5" cy="488.3" r="2.70"/><circle cx="282.3" cy="486.4" r="2.70"/><circle cx="278.4" cy="484.3" r="2.70"/><circle cx="274.9" cy="484.6" r="2.70"/><circle cx="269.4" cy="482.8" r="2.70"/><circle cx="266.7" cy="481.9" r="2.70"/><circle cx="263.2" cy="481.4" r="2.70"/><circle cx="251.9" cy="477.2" r="2.70"/><circle cx="247.0" cy="475.7" r="2.70"/><circle cx="240.8" cy="474.1" r="2.70"/><circle cx="236.4" cy="472.2" r="2.70"/><circle cx="233.6" cy="469.9" r="2.70"/><circle cx="228.4" cy="467.7" r="2.70"/><circle cx="222.1" cy="465.2" r="2.70"/><circle cx="216.5" cy="463.1" r="2.70"/><circle cx="214.1" cy="461.5" r="2.70"/><circle cx="208.5" cy="458.4" r="2.70"/><circle cx="204.8" cy="455.7" r="2.70"/><circle cx="200.6" cy="454.3" r="2.70"/><circle cx="195.4" cy="450.4" r="2.70"/><circle cx="192.7" cy="449.3" r="2.70"/><circle cx="187.9" cy="445.3" r="2.70"/><circle cx="185.6" cy="444.5" r="2.70"/><circle cx="182.4" cy="442.2" r="2.70"/><circle cx="168.1" cy="430.3" r="2.70"/><circle cx="165.4" cy="428.7" r="2.70"/><circle cx="163.2" cy="427.1" r="2.70"/><circle cx="154.3" cy="417.9" r="2.70"/><circle cx="149.3" cy="414.0" r="2.70"/><circle cx="147.4" cy="410.4" r="2.70"/><circle cx="136.9" cy="399.8" r="2.70"/><circle cx="132.8" cy="394.5" r="2.70"/><circle cx="130.5" cy="391.1" r="2.70"/><circle cx="127.0" cy="387.5" r="2.70"/><circle cx="125.3" cy="384.6" r="2.70"/><circle cx="122.0" cy="381.7" r="2.70"/><circle cx="121.3" cy="378.4" r="2.70"/><circle cx="113.6" cy="368.7" r="2.70"/><circle cx="111.9" cy="365.9" r="2.70"/><circle cx="109.8" cy="361.7" r="2.70"/><circle cx="105.6" cy="354.8" r="2.70"/><circle cx="103.4" cy="351.4" r="2.70"/><circle cx="102.8" cy="347.7" r="2.70"/><circle cx="100.3" cy="343.2" r="2.70"/><circle cx="105.1" cy="104.7" r="2.70"/><circle cx="109.9" cy="95.0" r="2.70"/><circle cx="111.8" cy="91.9" r="2.70"/><circle cx="114.9" cy="87.4" r="2.70"/><circle cx="117.9" cy="82.3" r="2.70"/><circle cx="120.4" cy="79.6" r="2.70"/><circle cx="123.3" cy="75.5" r="2.70"/><circle cx="127.1" cy="70.6" r="2.70"/><circle cx="128.6" cy="67.5" r="2.70"/><circle cx="131.0" cy="64.5" r="2.70"/><circle cx="132.8" cy="62.0" r="2.70"/><circle cx="137.5" cy="57.3" r="2.70"/><circle cx="139.0" cy="55.4" r="2.70"/><circle cx="145.0" cy="48.2" r="2.70"/><circle cx="527.2" cy="47.5" r="2.70"/></g>
<g class="d7" fill="#28cdf0" fill-opacity="0.8" stroke="#1e99b4" stroke-opacity="0.55" stroke-width="0.7"><circle cx="528.4" cy="449.3" r="2.60"/><circle cx="525.1" cy="451.8" r="2.60"/><circle cx="519.3" cy="457.0" r="2.60"/><circle cx="518.4" cy="458.6" r="2.60"/><circle cx="514.8" cy="460.5" r="2.60"/><circle cx="513.9" cy="462.3" r="2.60"/><circle cx="510.2" cy="463.6" r="2.60"/><circle cx="508.1" cy="466.6" r="2.60"/><circle cx="506.2" cy="466.9" r="2.60"/><circle cx="504.3" cy="469.3" r="2.60"/><circle cx="503.1" cy="470.1" r="2.60"/><circle cx="500.2" cy="471.1" r="2.60"/><circle cx="497.3" cy="474.0" r="2.60"/><circle cx="495.4" cy="475.0" r="2.60"/><circle cx="488.8" cy="479.4" r="2.60"/><circle cx="486.4" cy="480.2" r="2.60"/><circle cx="483.6" cy="482.0" r="2.60"/><circle cx="479.7" cy="483.2" r="2.60"/><circle cx="477.7" cy="484.5" r="2.60"/><circle cx="474.5" cy="487.3" r="2.60"/><circle cx="471.3" cy="489.2" r="2.60"/><circle cx="468.3" cy="489.6" r="2.60"/><circle cx="464.9" cy="492.1" r="2.60"/><circle cx="461.3" cy="493.3" r="2.60"/><circle cx="457.8" cy="494.6" r="2.60"/><circle cx="213.4" cy="493.3" r="2.60"/><circle cx="211.0" cy="492.5" r="2.60"/><circle cx="204.2" cy="489.3" r="2.60"/><circle cx="201.8" cy="488.2" r="2.60"/><circle cx="200.3" cy="488.1" r="2.60"/><circle cx="198.3" cy="485.8" r="2.60"/><circle cx="194.6" cy="484.5" r="2.60"/><circle cx="191.1" cy="483.2" r="2.60"/><circle cx="188.9" cy="481.4" r="2.60"/><circle cx="186.9" cy="480.3" r="2.60"/><circle cx="184.2" cy="478.7" r="2.60"/><circle cx="183.2" cy="477.1" r="2.60"/><circle cx="179.3" cy="476.2" r="2.60"/><circle cx="176.9" cy="473.4" r="2.60"/><circle cx="174.7" cy="473.1" r="2.60"/><circle cx="172.0" cy="470.5" r="2.60"/><circle cx="170.1" cy="469.5" r="2.60"/><circle cx="168.6" cy="468.1" r="2.60"/><circle cx="165.8" cy="465.8" r="2.60"/><circle cx="163.6" cy="465.0" r="2.60"/><circle cx="161.2" cy="463.5" r="2.60"/><circle cx="159.8" cy="462.0" r="2.60"/><circle cx="158.5" cy="460.3" r="2.60"/><circle cx="156.0" cy="459.6" r="2.60"/><circle cx="155.3" cy="457.9" r="2.60"/><circle cx="153.2" cy="455.9" r="2.60"/><circle cx="150.4" cy="454.6" r="2.60"/><circle cx="148.0" cy="452.0" r="2.60"/><circle cx="145.7" cy="450.2" r="2.60"/><circle cx="143.7" cy="448.6" r="2.60"/><circle cx="140.4" cy="446.7" r="2.60"/><circle cx="138.5" cy="444.5" r="2.60"/><circle cx="135.2" cy="442.0" r="2.60"/><circle cx="134.2" cy="440.2" r="2.60"/><circle cx="132.5" cy="439.0" r="2.60"/><circle cx="130.4" cy="436.3" r="2.60"/><circle cx="127.7" cy="434.1" r="2.60"/><circle cx="124.7" cy="431.2" r="2.60"/><circle cx="122.8" cy="428.5" r="2.60"/><circle cx="121.1" cy="426.5" r="2.60"/><circle cx="115.6" cy="420.6" r="2.60"/><circle cx="114.5" cy="419.3" r="2.60"/><circle cx="113.3" cy="417.8" r="2.60"/><circle cx="111.5" cy="415.8" r="2.60"/><circle cx="110.9" cy="413.9" r="2.60"/><circle cx="108.0" cy="411.0" r="2.60"/><circle cx="106.1" cy="409.6" r="2.60"/><circle cx="104.7" cy="406.1" r="2.60"/><circle cx="103.1" cy="404.8" r="2.60"/><circle cx="100.9" cy="403.3" r="2.60"/><circle cx="100.8" cy="54.6" r="2.60"/><circle cx="101.4" cy="53.1" r="2.60"/><circle cx="103.0" cy="50.9" r="2.60"/><circle cx="106.0" cy="49.1" r="2.60"/><circle cx="108.0" cy="46.3" r="2.60"/></g>
<g class="d8" fill="#e4501c" fill-opacity="0.8" stroke="#ab3c15" stroke-opacity="0.55" stroke-width="0.7"><circle cx="526.7" cy="470.4" r="2.70"/><circle cx="523.5" cy="471.9" r="2.70"/><circle cx="521.4" cy="472.9" r="2.70"/><circle cx="520.2" cy="475.3" r="2.70"/><circle cx="515.9" cy="477.8" r="2.70"/><circle cx="511.9" cy="480.9" r="2.70"/><circle cx="509.6" cy="482.2" r="2.70"/><circle cx="505.2" cy="484.3" r="2.70"/><circle cx="503.0" cy="486.4" r="2.70"/><circle cx="498.9" cy="489.9" r="2.70"/><circle cx="494.4" cy="492.6" r="2.70"/><circle cx="490.5" cy="493.6" r="2.70"/><circle cx="181.3" cy="493.5" r="2.70"/><circle cx="177.4" cy="491.7" r="2.70"/><circle cx="164.6" cy="482.5" r="2.70"/><circle cx="160.3" cy="480.6" r="2.70"/><circle cx="158.0" cy="478.2" r="2.70"/><circle cx="156.4" cy="477.1" r="2.70"/><circle cx="153.0" cy="474.3" r="2.70"/><circle cx="149.4" cy="471.6" r="2.70"/><circle cx="145.4" cy="468.5" r="2.70"/><circle cx="142.3" cy="466.8" r="2.70"/><circle cx="140.5" cy="464.5" r="2.70"/><circle cx="138.1" cy="463.6" r="2.70"/><circle cx="135.3" cy="460.1" r="2.70"/><circle cx="126.9" cy="452.9" r="2.70"/><circle cx="114.5" cy="440.6" r="2.70"/><circle cx="113.5" cy="438.9" r="2.70"/><circle cx="110.8" cy="435.8" r="2.70"/><circle cx="108.5" cy="434.1" r="2.70"/><circle cx="105.9" cy="431.6" r="2.70"/><circle cx="104.6" cy="429.9" r="2.70"/><circle cx="101.4" cy="426.7" r="2.70"/></g>
<g class="d9" fill="#30d0f0" fill-opacity="0.8" stroke="#249cb4" stroke-opacity="0.55" stroke-width="0.7"><circle cx="526.6" cy="478.5" r="2.30"/><circle cx="524.9" cy="479.1" r="2.30"/><circle cx="515.1" cy="486.0" r="2.30"/><circle cx="513.0" cy="488.4" r="2.30"/><circle cx="510.0" cy="490.5" r="2.30"/><circle cx="508.1" cy="491.2" r="2.30"/><circle cx="506.0" cy="492.4" r="2.30"/><circle cx="169.5" cy="493.9" r="2.30"/><circle cx="167.1" cy="492.2" r="2.30"/><circle cx="164.7" cy="491.8" r="2.30"/><circle cx="162.5" cy="489.7" r="2.30"/><circle cx="160.6" cy="488.9" r="2.30"/><circle cx="158.0" cy="486.6" r="2.30"/><circle cx="156.0" cy="485.8" r="2.30"/><circle cx="154.2" cy="484.7" r="2.30"/><circle cx="152.9" cy="482.5" r="2.30"/><circle cx="149.7" cy="480.0" r="2.30"/><circle cx="145.9" cy="478.6" r="2.30"/><circle cx="144.2" cy="475.9" r="2.30"/><circle cx="140.6" cy="473.4" r="2.30"/><circle cx="136.7" cy="471.4" r="2.30"/><circle cx="134.5" cy="469.4" r="2.30"/><circle cx="133.4" cy="467.0" r="2.30"/><circle cx="130.7" cy="465.1" r="2.30"/><circle cx="128.0" cy="462.6" r="2.30"/><circle cx="124.6" cy="459.9" r="2.30"/><circle cx="122.2" cy="457.5" r="2.30"/><circle cx="119.1" cy="455.1" r="2.30"/><circle cx="117.2" cy="453.6" r="2.30"/><circle cx="115.4" cy="451.5" r="2.30"/><circle cx="113.2" cy="449.3" r="2.30"/><circle cx="110.8" cy="446.8" r="2.30"/><circle cx="105.7" cy="441.1" r="2.30"/><circle cx="103.2" cy="438.8" r="2.30"/><circle cx="100.3" cy="435.5" r="2.30"/></g>
<g class="d10" fill="#e8341a" fill-opacity="0.8" stroke="#ae2713" stroke-opacity="0.55" stroke-width="0.7"><circle cx="529.6" cy="480.8" r="2.50"/><circle cx="528.4" cy="482.2" r="2.50"/><circle cx="524.6" cy="483.9" r="2.50"/><circle cx="523.2" cy="485.4" r="2.50"/><circle cx="520.6" cy="487.6" r="2.50"/><circle cx="518.7" cy="488.6" r="2.50"/><circle cx="516.1" cy="490.1" r="2.50"/><circle cx="514.8" cy="491.7" r="2.50"/><circle cx="511.5" cy="493.7" r="2.50"/><circle cx="160.2" cy="492.1" r="2.50"/><circle cx="157.2" cy="491.1" r="2.50"/><circle cx="155.3" cy="488.9" r="2.50"/><circle cx="147.1" cy="484.0" r="2.50"/><circle cx="144.1" cy="480.3" r="2.50"/><circle cx="140.7" cy="477.8" r="2.50"/><circle cx="134.5" cy="472.6" r="2.50"/><circle cx="130.7" cy="471.1" r="2.50"/><circle cx="122.6" cy="463.6" r="2.50"/><circle cx="121.1" cy="462.6" r="2.50"/><circle cx="120.5" cy="460.5" r="2.50"/><circle cx="118.7" cy="459.3" r="2.50"/><circle cx="117.3" cy="458.0" r="2.50"/><circle cx="114.6" cy="454.6" r="2.50"/><circle cx="112.8" cy="453.8" r="2.50"/><circle cx="110.5" cy="452.4" r="2.50"/><circle cx="108.3" cy="449.3" r="2.50"/><circle cx="105.3" cy="446.9" r="2.50"/></g>
<g class="d11" fill="#1888d8" fill-opacity="0.8" stroke="#1266a2" stroke-opacity="0.55" stroke-width="0.7"><circle cx="110.8" cy="492.7" r="2.30"/><circle cx="107.9" cy="491.7" r="2.30"/><circle cx="104.5" cy="488.4" r="2.30"/><circle cx="102.5" cy="486.3" r="2.30"/><circle cx="100.3" cy="484.7" r="2.30"/></g>
<circle cx="336.8" cy="228.3" r="20" fill="url(#halo)"/>
<g fill="#b4b4b4"><rect x="104" y="153.9" width="422" height="7.6"/><rect x="104" y="265.9" width="422" height="7.6"/><rect x="104" y="377.9" width="422" height="7.9"/><rect x="313.8" y="49" width="2.35" height="442" fill="#b0b0b2"/><polygon points="343,229.7 354,225.2 526,225.2 526,234.9 356,234.9 343,232.3"/></g>
<circle cx="336.8" cy="228.3" r="7.5" fill="#b4b4b4"/>
<g stroke="#111" stroke-width="1.1">
<path d="M352.9 109.8h7M356.4 106.0v7.6"/>
<path d="M168.2 194.1h7M171.7 190.29999999999998v7.6"/>
<path d="M182.7 126.4h7M186.2 122.60000000000001v7.6"/>
<path d="M463.9 75h7M467.4 71.2v7.6"/>
<path d="M212.0 401.5h7M215.5 397.7v7.6"/>
<path d="M186.9 55.4h7M190.4 51.6v7.6"/>
<path d="M137.1 475.7h7M140.6 471.9v7.6"/>
<path d="M114.9 458.6h7M118.4 454.8v7.6"/>
<path d="M101.5 488h7M105 484.2v7.6"/>
<path d="M197.2 487.4h7M200.7 483.59999999999997v7.6"/>
<path d="M307.8 489h7M311.3 485.2v7.6"/>
<path d="M519.2 471.3h7M522.7 467.5v7.6"/>
</g>
<g font-family="Liberation Sans" font-size="8.5" fill="#111">
<text x="361.4" y="115.6">a</text>
<text x="176.7" y="199.9">b</text>
<text x="191.2" y="132.20000000000002">c</text>
<text x="472.4" y="80.8">d</text>
<text x="220.5" y="407.3">e</text>
<text x="195.4" y="61.199999999999996">f</text>
<text x="145.6" y="481.5">j</text>
<text x="123.4" y="464.40000000000003">k</text>
<text x="110" y="493.8">l</text>
<text x="205.7" y="493.2">h</text>
</g>
</svg>
<div class="t" style="left:104.50px;top:494.93px;font-size:8.0px;line-height:8.0px;color:#2a2a2a;letter-spacing:0.62px"><b>X:</b> 2031.445</div>
<div class="t" style="left:195.30px;top:494.93px;font-size:8.0px;line-height:8.0px;color:#2a2a2a;letter-spacing:0.62px"><b>Y:</b> 112.5019</div>
<div class="t" style="left:286.00px;top:494.93px;font-size:8.0px;line-height:8.0px;color:#2a2a2a;letter-spacing:0.2px"><b>Value:</b> 3</div>
<div class="t" style="left:531.30px;top:28.87px;font-size:8.3px;line-height:8.3px;color:#2e3436">Help</div>
<div class="a" style="left:532.00px;top:40.30px;width:214.70px;height:105.90px;border:1px solid #d6d6d6;background:#e9e9e9;border-radius:2px"></div>
<div class="t" style="left:538.10px;top:48.37px;font-size:8.3px;line-height:8.3px;color:#2e3436">Identify rings from the image.</div>
<div class="t" style="left:538.10px;top:66.47px;font-size:8.3px;line-height:8.3px;color:#2e3436">Click on the ring you want to select. Usually it is the</div>
<div class="t" style="left:538.10px;top:77.47px;font-size:8.3px;line-height:8.3px;color:#2e3436">first one, else update it&#8217;s number in the list of the picked</div>
<div class="t" style="left:538.10px;top:89.47px;font-size:8.3px;line-height:8.3px;color:#2e3436">rings bellow.</div>
<div class="t" style="left:538.10px;top:107.47px;font-size:8.3px;line-height:8.3px;color:#2e3436">You have to identify at least 5 peaks distributed on 2</div>
<div class="t" style="left:538.10px;top:118.47px;font-size:8.3px;line-height:8.3px;color:#2e3436">rings. Then use the extraction tool to find more peaks</div>
<div class="t" style="left:538.10px;top:129.87px;font-size:8.3px;line-height:8.3px;color:#2e3436">automatically.</div>
<div class="t" style="left:531.30px;top:151.47px;font-size:8.3px;line-height:8.3px;color:#2e3436">Picked rings</div>
<div class="a" style="left:532.00px;top:163.00px;width:214.70px;height:234.00px;border:1px solid #d6d6d6;background:#e9e9e9;border-radius:2px"></div>
<svg class="a" style="left:543px;top:173px" width="12" height="12" viewBox="0 0 12 12"><path d="M1 5L3 3H7L8.5 4.5H11L9.5 11H1.5Z" fill="#f0902a" stroke="#c06010" stroke-width="0.6"/><path d="M5 4Q6 0.8 9.5 1.5" stroke="#2aa050" stroke-width="1.2" fill="none"/><path d="M8.5 0L11 1.7L8.5 3Z" fill="#2aa050"/></svg>
<svg class="a" style="left:561.5px;top:173.5px" width="11" height="11" viewBox="0 0 11 11"><path d="M0.5 0.5H9L10.5 2V10.5H0.5Z" fill="#111"/><rect x="2.5" y="1.2" width="6" height="3" fill="#fff"/><rect x="2" y="6.5" width="7" height="3" fill="#fff"/></svg>
<div class="a" style="left:578px;top:172px;width:1px;height:14px;background:#d4d4d4"></div>
<svg class="a" style="left:583px;top:173px" width="12" height="12" viewBox="0 0 12 12"><path d="M4 2.5H8Q11 2.5 11 6Q11 9.5 8 9.5H5" fill="none" stroke="#e8c020" stroke-width="2"/><path d="M0.5 2.5L4.5 0V5Z" fill="#e8c020"/></svg>
<svg class="a" style="left:600px;top:173px" width="12" height="12" viewBox="0 0 12 12"><path d="M8 2.5H4Q1 2.5 1 6Q1 9.5 4 9.5H7" fill="none" stroke="#cfcfcf" stroke-width="2"/><path d="M11.5 2.5L7.5 0V5Z" fill="#cfcfcf"/></svg>
<svg class="a" style="left:542px;top:197px" width="14" height="13" viewBox="0 0 14 13"><path d="M1.5 2.5Q8 -0.5 11 3Q13 6.5 11 9.5Q8 13 1.5 11" fill="none" stroke="#555" stroke-width="0.8"/><g fill="#f39020"><circle cx="3.5" cy="2" r="1.1"/><circle cx="6.5" cy="1.4" r="1.1"/><circle cx="10.5" cy="3.3" r="1.1"/><circle cx="10.5" cy="9.6" r="1.1"/><circle cx="6" cy="11.5" r="1.1"/></g></svg>
<svg class="a" style="left:559px;top:197px" width="13" height="13" viewBox="0 0 13 13"><path d="M1 1Q8 2 11 11.5" fill="none" stroke="#555" stroke-width="0.8"/><g fill="#f39020"><circle cx="1.5" cy="1" r="1.1"/><circle cx="5" cy="2.2" r="1.2"/><circle cx="8" cy="4.5" r="1.2"/><circle cx="9.8" cy="7.5" r="1.2"/><circle cx="11" cy="11" r="1.2"/></g></svg>
<div class="a" style="left:576px;top:195px;width:17.5px;height:17.5px;background:#dadada;border:1px solid #c4c4c4;border-radius:2px"></div>
<svg class="a" style="left:578px;top:197px" width="14" height="14" viewBox="0 0 14 14"><path d="M1 1.5Q9 2.5 12 13" fill="none" stroke="#222" stroke-width="1"/><circle cx="10" cy="7" r="1.3" fill="#f08a20"/></svg>
<svg class="a" style="left:601px;top:196px" width="10" height="15" viewBox="0 0 10 15"><path d="M5 0.5V7" stroke="#222" stroke-width="1.6"/><path d="M2.5 7H7.5V9H2.5Z" fill="#222"/><path d="M2 9H8L8.5 14H1.5Z" fill="#f0a020"/><path d="M2 12H8.5V14H1.5Z" fill="#e03020"/></svg>
<svg class="a" style="left:620px;top:198px" width="11" height="11" viewBox="0 0 11 11"><path d="M7 0.5L10.5 4L5 9.5H2.5L0.5 7.5Z" fill="#555"/><path d="M3 5L6 8L5 9.5H2.5L0.5 7.5Z" fill="#eee" stroke="#777" stroke-width="0.4"/></svg>
<div class="a" style="left:636px;top:197px;width:1px;height:14px;background:#d4d4d4"></div>
<svg class="a" style="left:641.5px;top:199px" width="10" height="10" viewBox="0 0 10 10"><path d="M5 0.5V9.5M0.5 5H9.5" stroke="#1fa040" stroke-width="1.8"/></svg>
<div class="inp" style="left:656.3px;top:196.50px;width:38.5px;height:14.5px"></div><div class="a" style="left:686.30px;top:197.50px;width:1px;height:12.5px;background:#dcdcdc"></div><svg class="a" style="left:687.80px;top:198.00px" width="5" height="12" viewBox="0 0 5 12"><path d="M0.6 4L2.5 1.4L4.4 4Z" fill="#444"/><path d="M0.6 7.0L2.5 9.5L4.4 7.0Z" fill="#444"/></svg>
<div class="t" style="left:658.70px;top:199.97px;font-size:8.3px;line-height:8.3px;color:#2e3436">9</div>
<div class="a" style="left:538px;top:218.4px;width:194px;height:13.1px;background:linear-gradient(#f4f4f4,#ebebeb);border:1px solid #d2d2d2"></div>
<div class="a" style="left:548.4px;top:219.5px;width:1px;height:11px;background:#d6d6d6"></div>
<div class="a" style="left:625.4px;top:219.5px;width:1px;height:11px;background:#d6d6d6"></div>
<div class="a" style="left:649.2px;top:219.5px;width:1px;height:11px;background:#d6d6d6"></div>
<div class="a" style="left:698.3px;top:219.5px;width:1px;height:11px;background:#d6d6d6"></div>
<div class="t" style="left:587.10px;top:221.67px;font-size:8.3px;line-height:8.3px;color:#2e3436;transform:translateX(-50%)">Name</div>
<div class="t" style="left:626.50px;top:221.67px;font-size:8.3px;line-height:8.3px;color:#2e3436">Peaks</div>
<div class="t" style="left:651.00px;top:221.67px;font-size:8.3px;line-height:8.3px;color:#2e3436">Ring number</div>
<div class="a" style="left:538px;top:231px;width:1px;height:133px;background:#d0d0d0"></div>
<div class="a" style="left:732px;top:218.5px;width:7.5px;height:148px;background:#e6e6e6;border-left:1px solid #e0e0e0"></div>
<div class="a" style="left:733px;top:230px;width:6px;height:40px;background:#d9d9d9"></div>
<svg class="a" style="left:733px;top:222px" width="6" height="5"><path d="M0.5 4L3 1L5.5 4Z" fill="#333"/></svg>
<svg class="a" style="left:733px;top:357px" width="6" height="5"><path d="M0.5 1L3 4L5.5 1Z" fill="#333"/></svg>
<svg class="a" style="left:540px;top:237.50px" width="7" height="7" viewBox="0 0 7 7"><rect width="7" height="7" fill="#e8501a"/><path d="M1.3 3.6L3 5.6L6.2 0.8" stroke="#000" stroke-width="1.2" fill="none"/></svg>
<div class="t" style="left:550.75px;top:238.57px;font-size:8.3px;line-height:8.3px;color:#2e3436">e</div>
<div class="t" style="left:627.80px;top:238.57px;font-size:8.3px;line-height:8.3px;color:#2e3436;letter-spacing:0.9px">240</div>
<div class="inp" style="left:650.4px;top:234.50px;width:48px;height:14.6px"></div><div class="a" style="left:689.90px;top:235.50px;width:1px;height:12.6px;background:#dcdcdc"></div><svg class="a" style="left:691.40px;top:236.00px" width="5" height="12" viewBox="0 0 5 12"><path d="M0.6 4L2.5 1.4L4.4 4Z" fill="#444"/><path d="M0.6 7.1L2.5 9.6L4.4 7.1Z" fill="#444"/></svg>
<div class="t" style="left:653.10px;top:238.57px;font-size:8.3px;line-height:8.3px;color:#2e3436">5</div>
<svg class="a" style="left:702px;top:236.80px" width="11" height="11" viewBox="0 0 11 11"><path d="M1.5 5.5A4 4 0 0 1 9 3.5" fill="none" stroke="#20a040" stroke-width="1.8"/><path d="M9.5 5.5A4 4 0 0 1 2 7.5" fill="none" stroke="#f09020" stroke-width="1.8"/><path d="M10.5 1.5V5H7Z" fill="#20a040"/><path d="M0.5 9.5V6H4Z" fill="#f09020"/></svg>
<svg class="a" style="left:718px;top:237.10px" width="10" height="10" viewBox="0 0 10 10"><rect width="10" height="10" rx="1" fill="#c01818"/><path d="M2.5 2.5L7.5 7.5M7.5 2.5L2.5 7.5" stroke="#fff" stroke-width="1.8"/></svg>
<svg class="a" style="left:540px;top:253.85px" width="7" height="7" viewBox="0 0 7 7"><rect width="7" height="7" fill="#20b0e0"/><path d="M1.3 3.6L3 5.6L6.2 0.8" stroke="#000" stroke-width="1.2" fill="none"/></svg>
<div class="t" style="left:550.75px;top:254.92px;font-size:8.3px;line-height:8.3px;color:#2e3436">f</div>
<div class="t" style="left:627.80px;top:254.92px;font-size:8.3px;line-height:8.3px;color:#2e3436;letter-spacing:0.9px">215</div>
<div class="inp" style="left:650.4px;top:250.85px;width:48px;height:14.6px"></div><div class="a" style="left:689.90px;top:251.85px;width:1px;height:12.6px;background:#dcdcdc"></div><svg class="a" style="left:691.40px;top:252.35px" width="5" height="12" viewBox="0 0 5 12"><path d="M0.6 4L2.5 1.4L4.4 4Z" fill="#444"/><path d="M0.6 7.1L2.5 9.6L4.4 7.1Z" fill="#444"/></svg>
<div class="t" style="left:653.10px;top:254.92px;font-size:8.3px;line-height:8.3px;color:#2e3436">6</div>
<svg class="a" style="left:702px;top:253.15px" width="11" height="11" viewBox="0 0 11 11"><path d="M1.5 5.5A4 4 0 0 1 9 3.5" fill="none" stroke="#20a040" stroke-width="1.8"/><path d="M9.5 5.5A4 4 0 0 1 2 7.5" fill="none" stroke="#f09020" stroke-width="1.8"/><path d="M10.5 1.5V5H7Z" fill="#20a040"/><path d="M0.5 9.5V6H4Z" fill="#f09020"/></svg>
<svg class="a" style="left:718px;top:253.45px" width="10" height="10" viewBox="0 0 10 10"><rect width="10" height="10" rx="1" fill="#c01818"/><path d="M2.5 2.5L7.5 7.5M7.5 2.5L2.5 7.5" stroke="#fff" stroke-width="1.8"/></svg>
<svg class="a" style="left:540px;top:270.20px" width="7" height="7" viewBox="0 0 7 7"><rect width="7" height="7" fill="#e8501a"/><path d="M1.3 3.6L3 5.6L6.2 0.8" stroke="#000" stroke-width="1.2" fill="none"/></svg>
<div class="t" style="left:550.75px;top:271.27px;font-size:8.3px;line-height:8.3px;color:#2e3436">g</div>
<div class="t" style="left:627.80px;top:271.27px;font-size:8.3px;line-height:8.3px;color:#2e3436;letter-spacing:0.9px">118</div>
<div class="inp" style="left:650.4px;top:267.20px;width:48px;height:14.6px"></div><div class="a" style="left:689.90px;top:268.20px;width:1px;height:12.6px;background:#dcdcdc"></div><svg class="a" style="left:691.40px;top:268.70px" width="5" height="12" viewBox="0 0 5 12"><path d="M0.6 4L2.5 1.4L4.4 4Z" fill="#444"/><path d="M0.6 7.1L2.5 9.6L4.4 7.1Z" fill="#444"/></svg>
<div class="t" style="left:653.10px;top:271.27px;font-size:8.3px;line-height:8.3px;color:#2e3436">7</div>
<svg class="a" style="left:702px;top:269.50px" width="11" height="11" viewBox="0 0 11 11"><path d="M1.5 5.5A4 4 0 0 1 9 3.5" fill="none" stroke="#20a040" stroke-width="1.8"/><path d="M9.5 5.5A4 4 0 0 1 2 7.5" fill="none" stroke="#f09020" stroke-width="1.8"/><path d="M10.5 1.5V5H7Z" fill="#20a040"/><path d="M0.5 9.5V6H4Z" fill="#f09020"/></svg>
<svg class="a" style="left:718px;top:269.80px" width="10" height="10" viewBox="0 0 10 10"><rect width="10" height="10" rx="1" fill="#c01818"/><path d="M2.5 2.5L7.5 7.5M7.5 2.5L2.5 7.5" stroke="#fff" stroke-width="1.8"/></svg>
<svg class="a" style="left:540px;top:286.55px" width="7" height="7" viewBox="0 0 7 7"><rect width="7" height="7" fill="#20b8e8"/><path d="M1.3 3.6L3 5.6L6.2 0.8" stroke="#000" stroke-width="1.2" fill="none"/></svg>
<div class="t" style="left:550.75px;top:287.62px;font-size:8.3px;line-height:8.3px;color:#2e3436">h</div>
<div class="t" style="left:627.80px;top:287.62px;font-size:8.3px;line-height:8.3px;color:#2e3436;letter-spacing:0.9px">45</div>
<div class="inp" style="left:650.4px;top:283.55px;width:48px;height:14.6px"></div><div class="a" style="left:689.90px;top:284.55px;width:1px;height:12.6px;background:#dcdcdc"></div><svg class="a" style="left:691.40px;top:285.05px" width="5" height="12" viewBox="0 0 5 12"><path d="M0.6 4L2.5 1.4L4.4 4Z" fill="#444"/><path d="M0.6 7.1L2.5 9.6L4.4 7.1Z" fill="#444"/></svg>
<div class="t" style="left:653.10px;top:287.62px;font-size:8.3px;line-height:8.3px;color:#2e3436">8</div>
<svg class="a" style="left:702px;top:285.85px" width="11" height="11" viewBox="0 0 11 11"><path d="M1.5 5.5A4 4 0 0 1 9 3.5" fill="none" stroke="#20a040" stroke-width="1.8"/><path d="M9.5 5.5A4 4 0 0 1 2 7.5" fill="none" stroke="#f09020" stroke-width="1.8"/><path d="M10.5 1.5V5H7Z" fill="#20a040"/><path d="M0.5 9.5V6H4Z" fill="#f09020"/></svg>
<svg class="a" style="left:718px;top:286.15px" width="10" height="10" viewBox="0 0 10 10"><rect width="10" height="10" rx="1" fill="#c01818"/><path d="M2.5 2.5L7.5 7.5M7.5 2.5L2.5 7.5" stroke="#fff" stroke-width="1.8"/></svg>
<svg class="a" style="left:540px;top:302.90px" width="7" height="7" viewBox="0 0 7 7"><rect width="7" height="7" fill="#e8601a"/><path d="M1.3 3.6L3 5.6L6.2 0.8" stroke="#000" stroke-width="1.2" fill="none"/></svg>
<div class="t" style="left:550.75px;top:303.97px;font-size:8.3px;line-height:8.3px;color:#2e3436">i</div>
<div class="t" style="left:627.80px;top:303.97px;font-size:8.3px;line-height:8.3px;color:#2e3436;letter-spacing:0.9px">34</div>
<div class="inp" style="left:650.4px;top:299.90px;width:48px;height:14.6px"></div><div class="a" style="left:689.90px;top:300.90px;width:1px;height:12.6px;background:#dcdcdc"></div><svg class="a" style="left:691.40px;top:301.40px" width="5" height="12" viewBox="0 0 5 12"><path d="M0.6 4L2.5 1.4L4.4 4Z" fill="#444"/><path d="M0.6 7.1L2.5 9.6L4.4 7.1Z" fill="#444"/></svg>
<div class="t" style="left:653.10px;top:303.97px;font-size:8.3px;line-height:8.3px;color:#2e3436">9</div>
<svg class="a" style="left:702px;top:302.20px" width="11" height="11" viewBox="0 0 11 11"><path d="M1.5 5.5A4 4 0 0 1 9 3.5" fill="none" stroke="#20a040" stroke-width="1.8"/><path d="M9.5 5.5A4 4 0 0 1 2 7.5" fill="none" stroke="#f09020" stroke-width="1.8"/><path d="M10.5 1.5V5H7Z" fill="#20a040"/><path d="M0.5 9.5V6H4Z" fill="#f09020"/></svg>
<svg class="a" style="left:718px;top:302.50px" width="10" height="10" viewBox="0 0 10 10"><rect width="10" height="10" rx="1" fill="#c01818"/><path d="M2.5 2.5L7.5 7.5M7.5 2.5L2.5 7.5" stroke="#fff" stroke-width="1.8"/></svg>
<svg class="a" style="left:540px;top:319.25px" width="7" height="7" viewBox="0 0 7 7"><rect width="7" height="7" fill="#30d0f0"/><path d="M1.3 3.6L3 5.6L6.2 0.8" stroke="#000" stroke-width="1.2" fill="none"/></svg>
<div class="t" style="left:550.75px;top:320.32px;font-size:8.3px;line-height:8.3px;color:#2e3436">j</div>
<div class="t" style="left:627.80px;top:320.32px;font-size:8.3px;line-height:8.3px;color:#2e3436;letter-spacing:0.9px">24</div>
<div class="inp" style="left:650.4px;top:316.25px;width:48px;height:14.6px"></div><div class="a" style="left:689.90px;top:317.25px;width:1px;height:12.6px;background:#dcdcdc"></div><svg class="a" style="left:691.40px;top:317.75px" width="5" height="12" viewBox="0 0 5 12"><path d="M0.6 4L2.5 1.4L4.4 4Z" fill="#444"/><path d="M0.6 7.1L2.5 9.6L4.4 7.1Z" fill="#444"/></svg>
<div class="t" style="left:653.10px;top:320.32px;font-size:8.3px;line-height:8.3px;color:#2e3436">10</div>
<svg class="a" style="left:702px;top:318.55px" width="11" height="11" viewBox="0 0 11 11"><path d="M1.5 5.5A4 4 0 0 1 9 3.5" fill="none" stroke="#20a040" stroke-width="1.8"/><path d="M9.5 5.5A4 4 0 0 1 2 7.5" fill="none" stroke="#f09020" stroke-width="1.8"/><path d="M10.5 1.5V5H7Z" fill="#20a040"/><path d="M0.5 9.5V6H4Z" fill="#f09020"/></svg>
<svg class="a" style="left:718px;top:318.85px" width="10" height="10" viewBox="0 0 10 10"><rect width="10" height="10" rx="1" fill="#c01818"/><path d="M2.5 2.5L7.5 7.5M7.5 2.5L2.5 7.5" stroke="#fff" stroke-width="1.8"/></svg>
<svg class="a" style="left:540px;top:335.60px" width="7" height="7" viewBox="0 0 7 7"><rect width="7" height="7" fill="#f02010"/><path d="M1.3 3.6L3 5.6L6.2 0.8" stroke="#000" stroke-width="1.2" fill="none"/></svg>
<div class="t" style="left:550.75px;top:336.67px;font-size:8.3px;line-height:8.3px;color:#2e3436">k</div>
<div class="t" style="left:627.80px;top:336.67px;font-size:8.3px;line-height:8.3px;color:#2e3436;letter-spacing:0.9px">23</div>
<div class="inp" style="left:650.4px;top:332.60px;width:48px;height:14.6px"></div><div class="a" style="left:689.90px;top:333.60px;width:1px;height:12.6px;background:#dcdcdc"></div><svg class="a" style="left:691.40px;top:334.10px" width="5" height="12" viewBox="0 0 5 12"><path d="M0.6 4L2.5 1.4L4.4 4Z" fill="#444"/><path d="M0.6 7.1L2.5 9.6L4.4 7.1Z" fill="#444"/></svg>
<div class="t" style="left:653.10px;top:336.67px;font-size:8.3px;line-height:8.3px;color:#2e3436">11</div>
<svg class="a" style="left:702px;top:334.90px" width="11" height="11" viewBox="0 0 11 11"><path d="M1.5 5.5A4 4 0 0 1 9 3.5" fill="none" stroke="#20a040" stroke-width="1.8"/><path d="M9.5 5.5A4 4 0 0 1 2 7.5" fill="none" stroke="#f09020" stroke-width="1.8"/><path d="M10.5 1.5V5H7Z" fill="#20a040"/><path d="M0.5 9.5V6H4Z" fill="#f09020"/></svg>
<svg class="a" style="left:718px;top:335.20px" width="10" height="10" viewBox="0 0 10 10"><rect width="10" height="10" rx="1" fill="#c01818"/><path d="M2.5 2.5L7.5 7.5M7.5 2.5L2.5 7.5" stroke="#fff" stroke-width="1.8"/></svg>
<svg class="a" style="left:540px;top:351.95px" width="7" height="7" viewBox="0 0 7 7"><rect width="7" height="7" fill="#1888d8"/><path d="M1.3 3.6L3 5.6L6.2 0.8" stroke="#000" stroke-width="1.2" fill="none"/></svg>
<div class="t" style="left:550.75px;top:353.02px;font-size:8.3px;line-height:8.3px;color:#2e3436">l</div>
<div class="t" style="left:627.80px;top:353.02px;font-size:8.3px;line-height:8.3px;color:#2e3436;letter-spacing:0.9px">1</div>
<div class="inp" style="left:650.4px;top:348.95px;width:48px;height:14.6px"></div><div class="a" style="left:689.90px;top:349.95px;width:1px;height:12.6px;background:#dcdcdc"></div><svg class="a" style="left:691.40px;top:350.45px" width="5" height="12" viewBox="0 0 5 12"><path d="M0.6 4L2.5 1.4L4.4 4Z" fill="#444"/><path d="M0.6 7.1L2.5 9.6L4.4 7.1Z" fill="#444"/></svg>
<div class="t" style="left:653.10px;top:353.02px;font-size:8.3px;line-height:8.3px;color:#2e3436">12</div>
<svg class="a" style="left:702px;top:351.25px" width="11" height="11" viewBox="0 0 11 11"><path d="M1.5 5.5A4 4 0 0 1 9 3.5" fill="none" stroke="#20a040" stroke-width="1.8"/><path d="M9.5 5.5A4 4 0 0 1 2 7.5" fill="none" stroke="#f09020" stroke-width="1.8"/><path d="M10.5 1.5V5H7Z" fill="#20a040"/><path d="M0.5 9.5V6H4Z" fill="#f09020"/></svg>
<svg class="a" style="left:718px;top:351.55px" width="10" height="10" viewBox="0 0 10 10"><rect width="10" height="10" rx="1" fill="#c01818"/><path d="M2.5 2.5L7.5 7.5M7.5 2.5L2.5 7.5" stroke="#fff" stroke-width="1.8"/></svg>
<div class="btn" style="left:538.5px;top:368px;width:195px;height:22px;border-radius:2px 0 0 2px"></div>
<div class="btn" style="left:733.5px;top:368.5px;width:6px;height:21px"></div>
<svg class="a" style="left:735px;top:376px" width="4" height="3"><path d="M0 0.5H4L2 2.5Z" fill="#444"/></svg>
<svg class="a" style="left:541px;top:375px" width="10" height="8" viewBox="0 0 10 8"><path d="M0.5 4Q5 -1 9.5 4Q5 9 0.5 4Z" fill="#fff" stroke="#222" stroke-width="1"/><circle cx="5" cy="4" r="1.8" fill="#222"/><circle cx="7.5" cy="6.5" r="1.3" fill="#f0a020"/></svg>
<div class="t" style="left:551.75px;top:376.47px;font-size:8.3px;line-height:8.3px;color:#2e3436">Extract all reachable rings</div>
<div class="t" style="left:531.20px;top:402.67px;font-size:8.3px;line-height:8.3px;color:#2e3436">Auto-extraction options</div>
<div class="a" style="left:532.00px;top:414.50px;width:214.70px;height:66.70px;border:1px solid #d6d6d6;background:#e9e9e9;border-radius:2px"></div>
<div class="t" style="left:537.90px;top:424.47px;font-size:8.3px;line-height:8.3px;color:#2e3436">Amount of ring to extract</div>
<div class="inp" style="left:643px;top:420.00px;width:97px;height:15.5px"></div><div class="a" style="left:731.50px;top:421.00px;width:1px;height:13.5px;background:#dcdcdc"></div><svg class="a" style="left:733.00px;top:421.50px" width="5" height="12" viewBox="0 0 5 12"><path d="M0.6 4L2.5 1.4L4.4 4Z" fill="#444"/><path d="M0.6 8.0L2.5 10.5L4.4 8.0Z" fill="#444"/></svg>
<div class="t" style="left:728.30px;top:424.47px;font-size:8.3px;line-height:8.3px;color:#2e3436;transform:translateX(-100%)">5</div>
<div class="t" style="left:537.90px;top:444.07px;font-size:8.3px;line-height:8.3px;color:#2e3436">Number of peak per degree:</div>
<div class="inp" style="left:643px;top:440.40px;width:97px;height:14.2px"></div><div class="a" style="left:731.50px;top:441.40px;width:1px;height:12.2px;background:#dcdcdc"></div><svg class="a" style="left:733.00px;top:441.90px" width="5" height="11" viewBox="0 0 5 11"><path d="M0.6 4L2.5 1.4L4.4 4Z" fill="#444"/><path d="M0.6 6.7L2.5 9.2L4.4 6.7Z" fill="#444"/></svg>
<div class="t" style="left:728.80px;top:444.07px;font-size:8.3px;line-height:8.3px;color:#2e3436;letter-spacing:0.55px;transform:translateX(-100%)">1.00</div>
<div class="t" style="left:537.90px;top:463.67px;font-size:8.3px;line-height:8.3px;color:#2e3436">Guess geometry from:</div>
<div class="btn" style="left:643px;top:459.8px;width:97px;height:15px"></div>
<div class="t" style="left:645.60px;top:463.67px;font-size:8.3px;line-height:8.3px;color:#2e3436">Control points</div>
<svg class="a" style="left:731px;top:465px" width="5" height="3"><path d="M0 0H5L2.5 2.5Z" fill="#444"/></svg>
<div class="btn" style="left:531px;top:485px;width:216px;height:21.5px"></div>
<div class="t" style="left:638.80px;top:492.37px;font-size:8.3px;line-height:8.3px;color:#2e3436;transform:translateX(-50%)">Next &gt;</div>
<div class="a" style="left:0.00px;top:0.00px;width:752.00px;height:512.00px;border:1px solid rgba(150,150,156,0.62);border-radius:3px 3px 0 0"></div>
</body></html>
